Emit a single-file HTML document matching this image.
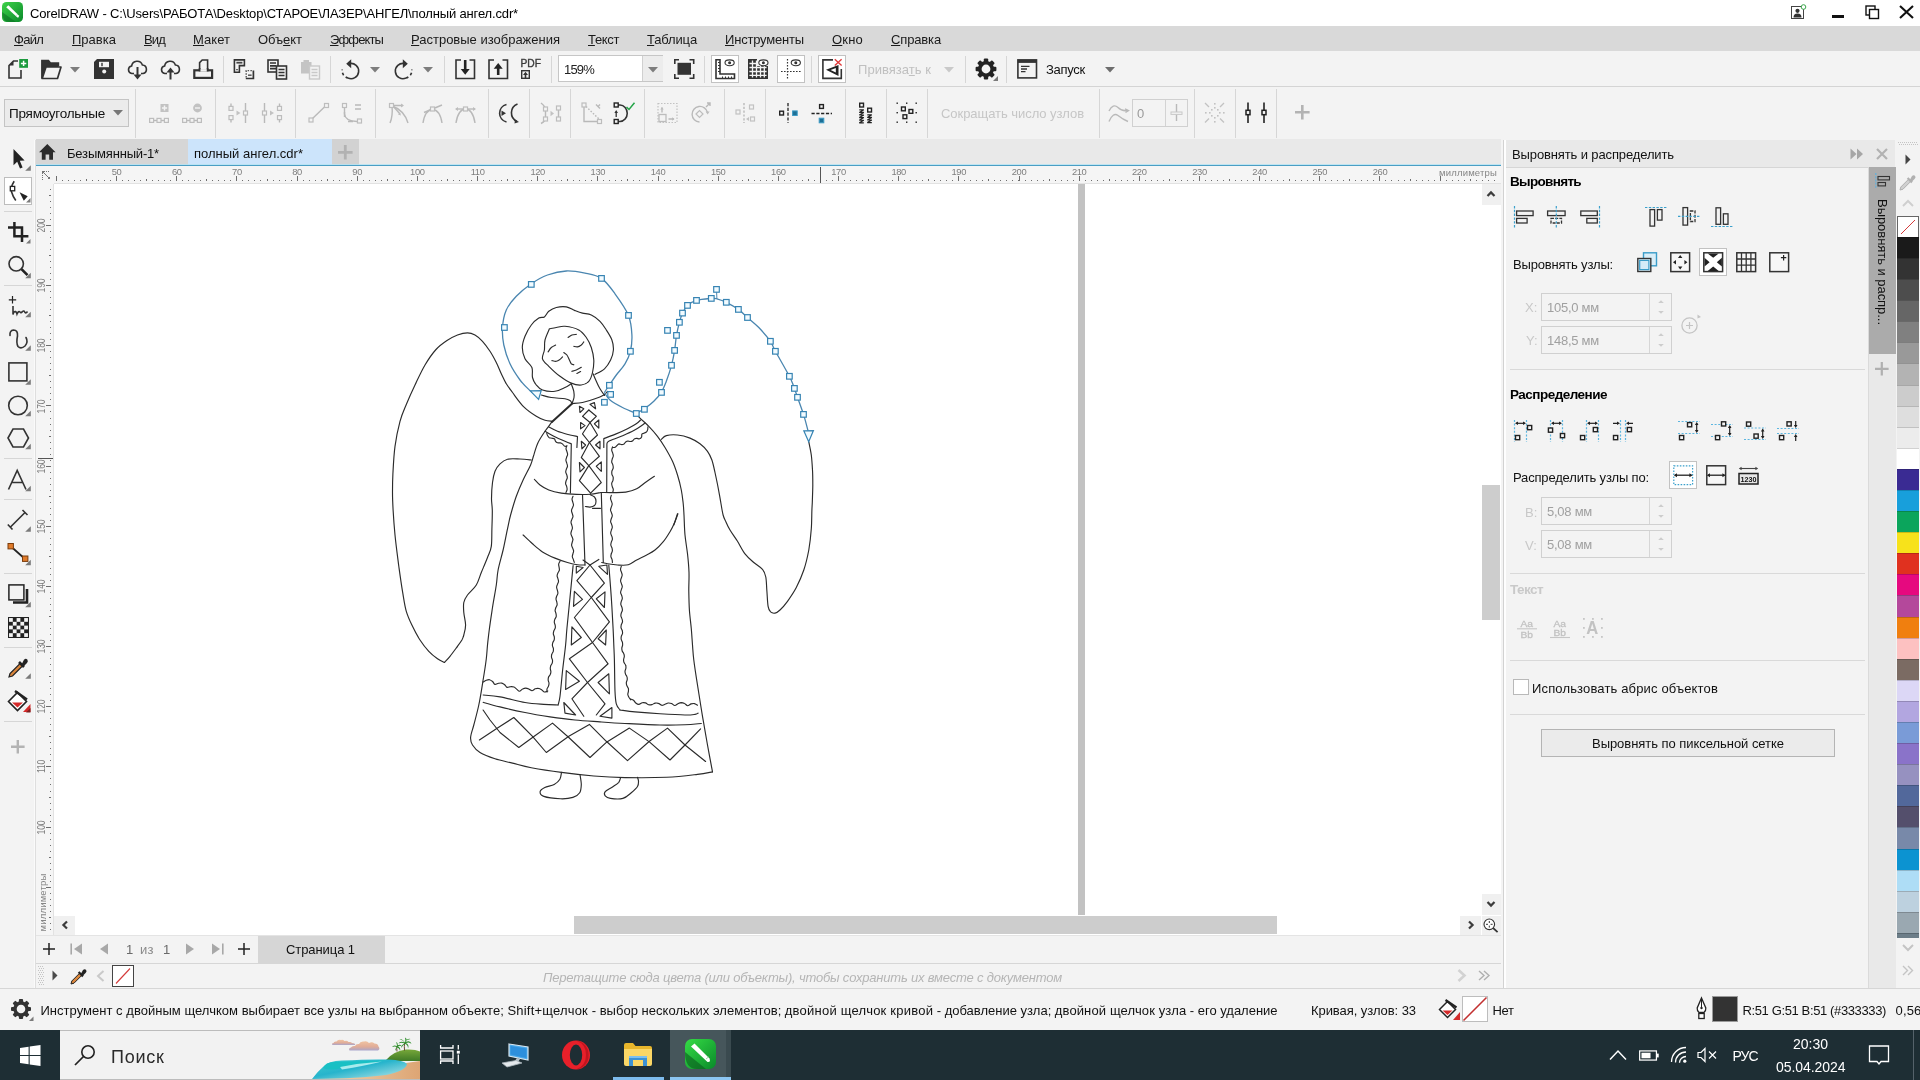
<!DOCTYPE html>
<html lang="ru">
<head>
<meta charset="utf-8">
<title>CorelDRAW - полный ангел.cdr</title>
<style>
html,body{margin:0;padding:0;}
body{width:1920px;height:1080px;overflow:hidden;will-change:transform;background:#f3f3f3;position:relative;
 font-family:"Liberation Sans",sans-serif;font-size:13px;color:#1a1a1a;}
.a{position:absolute;}
.t{position:absolute;white-space:nowrap;line-height:20px;height:20px;margin-top:1px;}
.g{color:#b4b4b4;}
svg{position:absolute;overflow:visible;}
.vs{position:absolute;width:1px;background:#d6d6d6;}
.hs{position:absolute;height:1px;background:#d6d6d6;}
.ic{stroke:#333;fill:none;stroke-width:1.6;}
.icd{stroke:#b9b9b9;fill:none;stroke-width:1.4;}

.rl{width:30px;text-align:center;font-size:9.4px;line-height:11px;height:11px;color:#7e7e7e;letter-spacing:-.35px}
.rv{width:30px;text-align:center;font-size:10px;line-height:11px;height:11px;color:#7e7e7e;letter-spacing:-.2px;margin-top:0;transform:rotate(-90deg) scaleX(.86)}
u{text-decoration:underline;text-underline-offset:1px;}
</style>
</head>
<body>
<!-- ===== title bar ===== -->
<div class="a" style="left:0;top:0;width:1920px;height:26px;background:#fff"></div>
<svg style="left:2px;top:2px" width="21" height="21" viewBox="0 0 21 21">
 <defs><linearGradient id="cg" x1="0" y1="0" x2="1" y2="1"><stop offset="0" stop-color="#3fd24a"/><stop offset="1" stop-color="#0a8a2a"/></linearGradient></defs>
 <rect x="0" y="0" width="21" height="20" rx="4.5" fill="url(#cg)"/>
 <path d="M0 10 Q0 20 8 20 L14 20 Z" fill="#0b6b22" opacity=".55"/>
 <path d="M4.2 5.2 L6.4 3.2 L16.6 13.2 Q17.6 15.6 15.4 15.6 Z" fill="#fff"/>
 <path d="M14.4 13.4 L15.8 12.2" stroke="#9bd6a2" stroke-width=".8"/>
</svg>
<span class="t" style="letter-spacing:-0.149px;left:30px;top:3px;font-size:13px;color:#000">CorelDRAW - C:\Users\РАБОТА\Desktop\СТАРОЕ\ЛАЗЕР\АНГЕЛ\полный ангел.cdr*</span>
<!-- window buttons -->
<svg style="left:1791px;top:4px" width="16" height="16" viewBox="0 0 16 16">
 <rect x=".5" y="2.5" width="12" height="12" fill="#fff" stroke="#444" stroke-width="1"/>
 <circle cx="6.5" cy="6.8" r="2.1" fill="#333"/><path d="M2.5 13.5 Q2.5 9.6 6.5 9.6 Q10.5 9.6 10.5 13.5Z" fill="#333"/>
 <circle cx="12.5" cy="3" r="2.3" fill="#fff" stroke="#3aa64a" stroke-width="1"/>
</svg>
<div class="a" style="left:1832px;top:15px;width:12px;height:3px;background:#111"></div>
<svg style="left:1865px;top:5px" width="15" height="15" viewBox="0 0 15 15"><rect x="1" y="1" width="9" height="9" fill="none" stroke="#111" stroke-width="1.4"/><rect x="4.5" y="4.5" width="9" height="9" fill="#fff" stroke="#111" stroke-width="1.4"/></svg>
<svg style="left:1899px;top:5px" width="15" height="14" viewBox="0 0 15 14"><path d="M1 1 L14 13 M14 1 L1 13" stroke="#111" stroke-width="2.1" fill="none"/></svg>

<!-- ===== menu bar ===== -->
<div class="a" style="left:0;top:26px;width:1920px;height:25px;background:#d9d9d9"></div>
<span class="t" style="letter-spacing:-0.742px;left:14px;top:29px"><u>Ф</u>айл</span>
<span class="t" style="letter-spacing:0.013px;left:72px;top:29px"><u>П</u>равка</span>
<span class="t" style="letter-spacing:-0.844px;left:144px;top:29px"><u>В</u>ид</span>
<span class="t" style="letter-spacing:0.037px;left:193px;top:29px"><u>М</u>акет</span>
<span class="t" style="letter-spacing:-0.049px;left:258px;top:29px">Объ<u>е</u>кт</span>
<span class="t" style="letter-spacing:-0.873px;left:330px;top:29px"><u>Э</u>ффекты</span>
<span class="t" style="letter-spacing:-0.005px;left:411px;top:29px"><u>Р</u>астровые изображения</span>
<span class="t" style="letter-spacing:-0.350px;left:588px;top:29px"><u>Т</u>екст</span>
<span class="t" style="letter-spacing:-0.141px;left:647px;top:29px"><u>Т</u>аблица</span>
<span class="t" style="letter-spacing:-0.188px;left:725px;top:29px"><u>И</u>нструменты</span>
<span class="t" style="letter-spacing:0.191px;left:832px;top:29px"><u>О</u>кно</span>
<span class="t" style="letter-spacing:-0.143px;left:891px;top:29px"><u>С</u>правка</span>
<!-- ===== standard toolbar (y 51-86) ===== -->
<div class="a" style="left:0;top:51px;width:1920px;height:35px;background:#f3f3f3"></div>
<div class="hs" style="left:0;top:86px;width:1920px;background:#d4d4d4"></div>
<!-- new -->
<svg style="left:7px;top:59px" width="21" height="21" viewBox="0 0 21 21">
 <path d="M11 2 H6.500 L2 6.500 V19 H14 V11" class="ic" stroke-width="1.700"/><path d="M6.500 2 V6.500 H2Z" fill="#333"/>
 <rect x="12.200" y="0" width="8.800" height="8.800" fill="#1c9a3e"/><path d="M16.600 1.700 V7.100 M13.900 4.400 H19.300" stroke="#fff" stroke-width="1.500"/>
</svg>
<!-- open -->
<svg style="left:41px;top:59px" width="21" height="21" viewBox="0 0 21 21">
 <path d="M.8 19.5 V1.5 H7.5 L9.5 4 H17.5 V7.5" fill="#333" stroke="#333" stroke-width="1.4"/>
 <path d="M1.2 19.5 L5 8 H20 L16.5 19.5 Z" fill="#f3f3f3" stroke="#333" stroke-width="1.7" stroke-linejoin="round"/>
</svg>
<svg style="left:70px;top:67px" width="10" height="6" viewBox="0 0 10 6"><path d="M0 0 H10 L5 5.5Z" fill="#7d7d7d"/></svg>
<!-- save -->
<svg style="left:94px;top:59px" width="21" height="21" viewBox="0 0 21 21">
 <path d="M3 0 H20 V20 H0 V3Z" fill="#333"/><rect x="5" y="2.800" width="10" height="5.400" fill="#f3f3f3"/><rect x="7.300" y="3.800" width="1.400" height="3.400" fill="#333"/><circle cx="10.200" cy="12.600" r="2" fill="#f3f3f3"/>
</svg>
<!-- cloud down -->
<svg style="left:127px;top:58.500px" width="21" height="21" viewBox="0 0 21 21">
 <path d="M7 14.5 H4.8 A3.8 3.8 0 0 1 4.6 7 A5.6 5.6 0 0 1 15.4 6 A4.3 4.3 0 0 1 16 14.5 H14" class="ic" stroke-width="1.6"/>
 <path d="M10.5 8 V17" stroke="#333" stroke-width="2"/><path d="M6.5 15.5 H14.5 L10.5 20.5Z" fill="#333"/>
</svg>
<!-- cloud up -->
<svg style="left:160px;top:58.500px" width="21" height="21" viewBox="0 0 21 21">
 <path d="M7 14.5 H4.8 A3.8 3.8 0 0 1 4.6 7 A5.6 5.6 0 0 1 15.4 6 A4.3 4.3 0 0 1 16 14.5 H14" class="ic" stroke-width="1.6"/>
 <path d="M10.5 12 V20.5" stroke="#333" stroke-width="2"/><path d="M6.5 13.5 H14.5 L10.5 8.5Z" fill="#333"/>
</svg>
<!-- print -->
<svg style="left:193px;top:59px" width="21" height="21" viewBox="0 0 21 21">
 <path d="M6.600 11 V3.600 L9.200 1 H14.600 V11" class="ic" stroke-width="1.700"/><rect x="1.300" y="11.300" width="17.800" height="7.600" fill="#f3f3f3" stroke="#333" stroke-width="2.200"/><path d="M6.600 11.300 H14.600" stroke="#f3f3f3" stroke-width="2.400"/><path d="M6.600 9 V12.400 M14.600 9 V12.400" stroke="#333" stroke-width="1.700"/>
</svg>
<div class="vs" style="left:223px;top:56px;height:27px"></div>
<!-- copy props -->
<svg style="left:233px;top:59px" width="22" height="21" viewBox="0 0 22 21">
 <path d="M1.400 .900 H11.400 V6.600 H6.400 V13.200 H1.400Z" class="ic" stroke-width="1.600"/><path d="M3.400 3.700 H9.400" stroke="#444" stroke-width="1.800"/><path d="M3.200 10.600 H4.800" stroke="#444" stroke-width="1.400"/>
 <path d="M20.400 11.400 V19.500 H12.800" fill="none" stroke="#333" stroke-width="1.700"/><path d="M13.200 18.600 V11.600 H19.600" fill="none" stroke="#555" stroke-width="1.400" stroke-dasharray="1.500 1.300"/><path d="M15 16.200 H18.600" stroke="#555" stroke-width="1.500"/>
</svg>
<!-- copy -->
<svg style="left:267px;top:59px" width="21" height="21" viewBox="0 0 21 21">
 <rect x="1" y="1" width="10" height="12" class="ic" stroke-width="1.6"/><path d="M3 4 H9 M3 6.8 H9 M3 9.6 H9" stroke="#333" stroke-width="1.7"/>
 <rect x="9.5" y="7" width="10" height="13" fill="#f3f3f3" stroke="#333" stroke-width="1.6"/><path d="M11.5 10.5 H17.5 M11.5 13.5 H17.5 M11.5 16.5 H17.5" stroke="#333" stroke-width="1.7"/>
</svg>
<!-- paste (disabled) -->
<svg style="left:300px;top:59px" width="21" height="21" viewBox="0 0 21 21">
 <path d="M1 3 H3.5 V1 H9 V3 H11.5 V14.5 H1Z" fill="#c4c4c4"/>
 <rect x="9.5" y="7" width="10" height="13" fill="#f3f3f3" stroke="#c9c9c9" stroke-width="1.4"/><path d="M11.5 10.5 H17.5 M11.5 13.5 H17.5 M11.5 16.5 H17.5" stroke="#c9c9c9" stroke-width="1.4"/>
</svg>
<div class="vs" style="left:330px;top:56px;height:27px"></div>
<!-- undo -->
<svg style="left:340px;top:59px" width="22" height="21" viewBox="0 0 22 21">
 <path d="M9.5 4.6 A7.6 7.6 0 1 1 8 19" class="ic" stroke-width="1.6"/>
 <path d="M8 19 A7.6 7.6 0 0 1 2.2 10.5" class="ic" stroke-width="1.6" stroke-dasharray="2.6 2.6"/>
 <path d="M6.2 4.8 L11.2 .3 V9.3Z" fill="#333"/>
</svg>
<svg style="left:370px;top:67px" width="10" height="6" viewBox="0 0 10 6"><path d="M0 0 H10 L5 5.5Z" fill="#7d7d7d"/></svg>
<!-- redo -->
<svg style="left:392px;top:59px" width="22" height="21" viewBox="0 0 22 21">
 <path d="M12.5 4.6 A7.6 7.6 0 1 0 14 19" class="ic" stroke-width="1.6"/>
 <path d="M14 19 A7.6 7.6 0 0 0 19.8 10.5" class="ic" stroke-width="1.6" stroke-dasharray="2.6 2.6"/>
 <path d="M15.8 4.8 L10.8 .3 V9.3Z" fill="#333"/>
</svg>
<svg style="left:423px;top:67px" width="10" height="6" viewBox="0 0 10 6"><path d="M0 0 H10 L5 5.5Z" fill="#7d7d7d"/></svg>
<div class="vs" style="left:444px;top:56px;height:27px"></div>
<!-- import -->
<svg style="left:455px;top:59px" width="21" height="21" viewBox="0 0 21 21">
 <path d="M6 1 H1 V19.5 H19.5 V1 H14.5" class="ic" stroke-width="1.7"/><path d="M10.2 1 V12" stroke="#222" stroke-width="2.6"/><path d="M5.7 10 H14.7 L10.2 15.8Z" fill="#222"/>
</svg>
<!-- export -->
<svg style="left:488px;top:59px" width="21" height="21" viewBox="0 0 21 21">
 <path d="M6 1 H1 V19.5 H19.5 V1 H14.5" class="ic" stroke-width="1.7"/><path d="M10.2 8 V16" stroke="#222" stroke-width="2.6"/><path d="M5.7 9.8 H14.7 L10.2 4Z" fill="#222"/>
</svg>
<!-- PDF -->
<svg style="left:521px;top:59px" width="21" height="21" viewBox="0 0 21 21">
 <text x="-.5" y="8.2" font-family="Liberation Sans,sans-serif" font-size="10.2" fill="#3a3a3a" stroke="#3a3a3a" stroke-width=".35" textLength="20.5" lengthAdjust="spacingAndGlyphs">PDF</text>
 <rect x=".7" y="11.7" width="7.6" height="7.6" fill="none" stroke="#333" stroke-width="1.4"/><path d="M4.5 19 V14.5" stroke="#333" stroke-width="1.6"/><path d="M2 16 L4.5 12.8 L7 16Z" fill="#333"/>
</svg>
<div class="vs" style="left:551px;top:56px;height:27px"></div>
<!-- zoom combo -->
<div class="a" style="left:558px;top:55px;width:105px;height:27px;box-sizing:border-box;border:1px solid #c6c6c6;background:#fff"></div>
<div class="a" style="left:642px;top:56px;width:20px;height:25px;background:#ececec;border-left:1px solid #d0d0d0"></div>
<svg style="left:648px;top:67px" width="10" height="6" viewBox="0 0 10 6"><path d="M0 0 H10 L5 5.5Z" fill="#7d7d7d"/></svg>
<span class="t" style="letter-spacing:-0.812px;left:564px;top:59px;font-size:13px;color:#222">159%</span>
<!-- full screen -->
<svg style="left:674px;top:59px" width="21" height="21" viewBox="0 0 21 21">
 <rect x="3.5" y="3.8" width="13.5" height="12" fill="#333"/>
 <path d="M.8 5 V.8 H5 M15.5 .8 H19.7 V5 M19.7 15 V19.2 H15.5 M5 19.2 H.8 V15" class="ic" stroke-width="1.6"/>
</svg>
<div class="vs" style="left:704px;top:56px;height:27px"></div>
<!-- rulers (active) -->
<div class="a" style="left:711px;top:55px;width:28px;height:28px;box-sizing:border-box;border:1px solid #c2c2c2;background:#fff"></div>
<svg style="left:715px;top:59px" width="21" height="21" viewBox="0 0 21 21">
 <path d="M1 .8 H5 V15 H19.5 V19.5 H1Z" class="ic" stroke-width="1.6"/><path d="M3 3.5 H5 M3 6.5 H5 M3 9.5 H5 M3 12.5 H5 M7.5 17.5 V19 M10.5 17.5 V19 M13.5 17.5 V19 M16.5 17.5 V19" stroke="#333" stroke-width="1"/>
 <ellipse cx="14.6" cy="3.8" rx="4.6" ry="2.9" fill="#fff" stroke="#333" stroke-width="1.1"/><circle cx="14.6" cy="3.8" r="1.5" fill="#333"/>
</svg>
<!-- grid -->
<svg style="left:748px;top:59px" width="21" height="21" viewBox="0 0 21 21">
 <g fill="#333"><rect x="0" y="0" width="20" height="20"/></g>
 <g stroke="#f3f3f3" stroke-width="1.3"><path d="M4.5 1.4 V18.6 M8.5 1.4 V18.6 M12.5 1.4 V18.6 M16.3 1.4 V18.6 M1.4 4.5 H18.6 M1.4 8.5 H18.6 M1.4 12.5 H18.6 M1.4 16.3 H18.6"/></g>
 <rect x="9" y="-1" width="12.5" height="8" fill="#f3f3f3"/>
 <ellipse cx="15.4" cy="3.8" rx="4.6" ry="2.9" fill="#fff" stroke="#333" stroke-width="1.1"/><circle cx="15.4" cy="3.8" r="1.5" fill="#333"/>
</svg>
<!-- guidelines (active) -->
<div class="a" style="left:777px;top:55px;width:28px;height:28px;box-sizing:border-box;border:1px solid #c2c2c2;background:#fff"></div>
<svg style="left:781px;top:59px" width="21" height="21" viewBox="0 0 21 21">
 <path d="M6.5 0 V20 M0 12.5 H20" stroke="#333" stroke-width="1.2" stroke-dasharray="1.6 1.4"/>
 <ellipse cx="14.8" cy="3.8" rx="4.6" ry="2.9" fill="#fff" stroke="#333" stroke-width="1.1"/><circle cx="14.8" cy="3.8" r="1.5" fill="#333"/>
</svg>
<div class="vs" style="left:811px;top:56px;height:27px"></div>
<!-- snap off (active) -->
<div class="a" style="left:818px;top:55px;width:28px;height:28px;box-sizing:border-box;border:1px solid #c2c2c2;background:#fff"></div>
<svg style="left:822px;top:59px" width="21" height="21" viewBox="0 0 21 21">
 <path d="M11 .9 H.9 V19.4 H19.3 V10" class="ic" stroke-width="1.6"/>
 <path d="M4 10.8 L16.5 6 V17 Z" fill="#222"/><path d="M8.6 10.9 L13.8 9 V13.4Z" fill="#fff"/>
 <path d="M12.8 .3 L19.6 6.4 M19.6 .3 L12.8 6.4" stroke="#e03a3a" stroke-width="1.4"/>
</svg>
<span class="t g" style="letter-spacing:0.037px;left:858px;top:59px;color:#c0c0c0">Привяза<u>т</u>ь к</span>
<svg style="left:944px;top:67px" width="10" height="6" viewBox="0 0 10 6"><path d="M0 0 H10 L5 5.5Z" fill="#c9c9c9"/></svg>
<div class="vs" style="left:965px;top:56px;height:27px"></div>
<!-- gear -->
<svg style="left:975px;top:58px" width="24" height="24" viewBox="0 0 24 24">
 <g transform="translate(11,11)"><circle r="6.2" fill="none" stroke="#222" stroke-width="3.6"/>
 <g fill="#222"><rect x="-2.2" y="-10.4" width="4.4" height="4" rx="1"/><rect x="-2.2" y="6.4" width="4.4" height="4" rx="1"/><rect x="-10.4" y="-2.2" width="4" height="4.4" rx="1"/><rect x="6.4" y="-2.2" width="4" height="4.4" rx="1"/>
 <g transform="rotate(45)"><rect x="-2.2" y="-10.4" width="4.4" height="4" rx="1"/><rect x="-2.2" y="6.4" width="4.4" height="4" rx="1"/><rect x="-10.4" y="-2.2" width="4" height="4.4" rx="1"/><rect x="6.4" y="-2.2" width="4" height="4.4" rx="1"/></g></g></g>
 <path d="M23 18 V23 H18Z" fill="#7a7a7a"/>
</svg>
<div class="vs" style="left:1006px;top:56px;height:27px"></div>
<!-- workspace window -->
<svg style="left:1017px;top:59px" width="21" height="20" viewBox="0 0 21 20">
 <rect x=".9" y=".9" width="18.6" height="18" class="ic" stroke-width="1.7"/><rect x=".9" y=".9" width="18.6" height="3" fill="#333"/><path d="M4 7.3 H12.5 M4 10 H10 M4 12.7 H8.5" stroke="#333" stroke-width="1.3"/>
</svg>
<span class="t" style="letter-spacing:-0.279px;left:1046px;top:59px;color:#111">Запуск</span>
<svg style="left:1105px;top:67px" width="10" height="6" viewBox="0 0 10 6"><path d="M0 0 H10 L5 5.5Z" fill="#6d6d6d"/></svg>
<!-- ===== property bar (y 87-139) ===== -->
<div class="a" style="left:0;top:87px;width:1920px;height:53px;background:#f3f3f3"></div>
<div class="a" style="left:4px;top:99px;width:125px;height:28px;box-sizing:border-box;border:1px solid #c4c4c4;background:#ebebeb"></div>
<span class="t" style="letter-spacing:-0.245px;left:9px;top:103px;font-size:13.5px;color:#111">Прямоугольные</span>
<svg style="left:113px;top:110px" width="10" height="6" viewBox="0 0 10 6"><path d="M0 0 H10 L5 5.5Z" fill="#777"/></svg>
<div class="vs" style="left:135px;top:89px;height:49px"></div>
<!-- add node (disabled) -->
<svg style="left:149px;top:103px" width="21" height="22" viewBox="0 0 21 22">
 <rect x="11.5" y="1" width="8" height="8" fill="#c2c2c2"/><path d="M15.500 2.400 V7.600 M12.900 5 H18.100" stroke="#f3f3f3" stroke-width="1.500"/>
 <path d="M0 17.5 H20" class="icd" stroke-width="1.2"/><g fill="#f3f3f3" stroke="#bdbdbd" stroke-width="1.2"><rect x=".6" y="15.4" width="4" height="4"/><rect x="8" y="15.4" width="4" height="4"/><rect x="15.4" y="15.4" width="4" height="4"/></g>
</svg>
<!-- delete node (disabled) -->
<svg style="left:182px;top:103px" width="21" height="22" viewBox="0 0 21 22">
 <circle cx="15.5" cy="5" r="4.4" fill="#c2c2c2"/><path d="M13 5 H18" stroke="#f3f3f3" stroke-width="1.4"/>
 <path d="M0 17.5 H20" class="icd" stroke-width="1.2"/><g fill="#f3f3f3" stroke="#bdbdbd" stroke-width="1.2"><rect x=".6" y="15.4" width="4" height="4"/><rect x="8" y="15.4" width="4" height="4"/><rect x="15.4" y="15.4" width="4" height="4"/></g>
</svg>
<div class="vs" style="left:215px;top:89px;height:49px"></div>
<!-- join (disabled) -->
<svg style="left:228px;top:102px" width="21" height="22" viewBox="0 0 21 22">
 <path d="M3 1.5 V4 M3 17.5 V20.5 M17.5 1 V21" class="icd"/><g fill="#f3f3f3" stroke="#bdbdbd" stroke-width="1.2"><rect x="1" y="4.4" width="4" height="4"/><rect x="1" y="13.6" width="4" height="4"/><rect x="15.5" y="9" width="4" height="4"/></g><path d="M8.5 8.4 L12.5 11 L8.5 13.6Z" fill="#c2c2c2"/>
</svg>
<!-- break (disabled) -->
<svg style="left:261px;top:102px" width="22" height="22" viewBox="0 0 22 22">
 <path d="M18.5 1.5 V4 M18.5 17.5 V20.5 M3.5 1 V21" class="icd"/><g fill="#f3f3f3" stroke="#bdbdbd" stroke-width="1.2"><rect x="16.5" y="4.4" width="4" height="4"/><rect x="16.5" y="13.6" width="4" height="4"/><rect x="1.5" y="9" width="4" height="4"/></g><path d="M9 8.4 L13 11 L9 13.6Z" fill="#c2c2c2"/>
</svg>
<div class="vs" style="left:295px;top:89px;height:49px"></div>
<!-- to line (disabled) -->
<svg style="left:308px;top:102px" width="22" height="22" viewBox="0 0 22 22">
 <path d="M4 17 L17.5 4" class="icd"/><g fill="#f3f3f3" stroke="#bdbdbd" stroke-width="1.2"><rect x="1" y="16" width="4" height="4"/><rect x="16.5" y="1.5" width="4" height="4"/></g>
</svg>
<!-- to curve (disabled) -->
<svg style="left:341px;top:102px" width="22" height="22" viewBox="0 0 22 22">
 <path d="M3.5 6 V12 Q4 19 16 19.5" class="icd"/><path d="M14 3 H20 M14 7 H20" class="icd"/><path d="M3.5 15 V10 M12 19.5 H7" class="icd" stroke-width="1"/>
 <g fill="#f3f3f3" stroke="#bdbdbd" stroke-width="1.2"><rect x="1.5" y="1.5" width="4" height="4"/><rect x="16.5" y="17" width="4" height="4"/></g>
</svg>
<div class="vs" style="left:375px;top:89px;height:49px"></div>
<!-- cusp (disabled) -->
<svg style="left:388px;top:102px" width="22" height="22" viewBox="0 0 22 22">
 <path d="M4 4 Q5 14 2 21 M4 4 Q16 8 20 21" class="icd"/><path d="M5 3.5 H15 M5 4 L12 12" class="icd"/><path d="M13 1.5 L16 3.5 L13 5.5Z M10 12.5 L13 13.5 L12 10.5Z" fill="#bdbdbd"/>
 <rect x="1.5" y="1.5" width="4" height="4" fill="#f3f3f3" stroke="#bdbdbd" stroke-width="1.2"/>
</svg>
<!-- smooth (disabled) -->
<svg style="left:422px;top:102px" width="22" height="22" viewBox="0 0 22 22">
 <path d="M1 21 Q3 8 10.5 7.5 Q18 8 20 21" class="icd"/><path d="M2 10.5 L20 3" class="icd"/>
 <rect x="8.5" y="5" width="4" height="4" fill="#f3f3f3" stroke="#bdbdbd" stroke-width="1.2"/>
</svg>
<!-- symmetrical (disabled) -->
<svg style="left:455px;top:102px" width="22" height="22" viewBox="0 0 22 22">
 <path d="M1 21 Q3 7.5 10.5 7 Q18 7.5 20 21" class="icd"/><path d="M1 7 H20" class="icd"/><path d="M0 7 L3 5 V9Z M21 7 L18 5 V9Z" fill="#bdbdbd"/>
 <rect x="8.5" y="5" width="4" height="4" fill="#f3f3f3" stroke="#bdbdbd" stroke-width="1.2"/>
</svg>
<div class="vs" style="left:488px;top:89px;height:49px"></div>
<!-- reverse direction -->
<svg style="left:498px;top:102px" width="22" height="22" viewBox="0 0 22 22">
 <path d="M8.5 2.5 A9 9 0 0 0 8.5 20" class="ic" stroke-width="1.6"/><path d="M19.5 2 A9.5 9.5 0 0 0 19 19.5" class="ic" stroke-width="1.6"/>
 <path d="M3.5 8.5 L8 11.2 L3.5 14Z" fill="#333"/><path d="M17 17.5 L21 20 L16.5 21.5Z" fill="#333"/>
</svg>
<div class="vs" style="left:529px;top:89px;height:49px"></div>
<!-- extract subpath (disabled) -->
<svg style="left:540px;top:102px" width="22" height="22" viewBox="0 0 22 22">
 <path d="M1 1 Q6 5 5.5 9 V15 Q6 19 1 21.5 M18.5 7 V17" class="icd"/><path d="M10.5 8.8 L14 11.5 L10.5 14.2Z" fill="#c2c2c2"/>
 <g fill="#f3f3f3" stroke="#bdbdbd" stroke-width="1.2"><rect x="3.5" y="5" width="4" height="4"/><rect x="3.5" y="15" width="4" height="4"/><rect x="16.5" y="4" width="4" height="4"/><rect x="16.5" y="15" width="4" height="4"/></g>
</svg>
<div class="vs" style="left:570px;top:89px;height:49px"></div>
<!-- extend curve to close (disabled) -->
<svg style="left:581px;top:102px" width="22" height="22" viewBox="0 0 22 22">
 <path d="M3 5 V19.5 H17" class="icd"/><path d="M5 4.5 L18 17" class="icd" stroke-dasharray="1.6 1.6"/><path d="M15 2.5 L19 6.5 M19 2.5 L17.5 4" class="icd" stroke-width="1"/>
 <g fill="#f3f3f3" stroke="#bdbdbd" stroke-width="1.2"><rect x="1" y="1" width="4" height="4"/><rect x="16.5" y="17.5" width="4" height="4"/></g>
</svg>
<!-- close curve -->
<svg style="left:613px;top:102px" width="23" height="22" viewBox="0 0 23 22">
 <path d="M5 3 H7 A7.200 8.200 0 0 1 7 19.500 H5" class="ic" stroke-width="1.500"/><path d="M3.2 15 V9.5" stroke="#333" stroke-width="1.3"/><path d="M1.4 11 L3.2 8 L5 11Z" fill="#333"/>
 <g fill="#f3f3f3" stroke="#222" stroke-width="1.4"><rect x="1.2" y="1" width="4" height="4"/><rect x="1.2" y="17.5" width="4" height="4"/></g>
 <path d="M13.5 5 L16 7.5 L21.5 .8" fill="none" stroke="#23a447" stroke-width="1.5"/>
</svg>
<div class="vs" style="left:644px;top:89px;height:49px"></div>
<!-- stretch/scale nodes (disabled) -->
<svg style="left:657px;top:102px" width="22" height="22" viewBox="0 0 22 22">
 <rect x="1" y="1.5" width="19" height="19" fill="none" stroke="#c2c2c2" stroke-width="1.2" stroke-dasharray="1.5 1.5"/>
 <rect x="2" y="12.5" width="7" height="7" fill="#f3f3f3" stroke="#bdbdbd" stroke-width="1.3"/><path d="M5 10.5 V5.5 M11.5 17 H17" class="icd" stroke-width="1.1"/><path d="M3.3 7.5 L5 5 L6.7 7.5Z M15 15.3 L17.6 17 L15 18.7Z" fill="#bdbdbd"/>
</svg>
<!-- rotate/skew nodes (disabled) -->
<svg style="left:690px;top:102px" width="22" height="22" viewBox="0 0 22 22">
 <path d="M9.5 20 A7.8 7.8 0 1 1 17.5 10.5" class="icd"/><path d="M15.6 9.5 L17.6 12.5 L19.6 9.5Z" fill="#bdbdbd"/>
 <path d="M6 12 L9.5 8.5 L13 12 L9.5 15.5Z" fill="#f3f3f3" stroke="#bdbdbd" stroke-width="1.2"/><path d="M16 5 L20 1 M17 1 H20 V4" class="icd" stroke-width="1.1"/>
</svg>
<div class="vs" style="left:724px;top:89px;height:49px"></div>
<!-- align nodes (disabled) -->
<svg style="left:735px;top:102px" width="22" height="22" viewBox="0 0 22 22">
 <path d="M9 1 V21" class="icd" stroke-dasharray="2.2 1.6"/><path d="M11 17 L14 15 V19Z" fill="#c2c2c2"/>
 <g fill="#f3f3f3" stroke="#c2c2c2" stroke-width="1.2"><rect x="1" y="8" width="4" height="4"/><rect x="14.5" y="3" width="4" height="4"/><rect x="15.5" y="15" width="4" height="4"/></g>
</svg>
<div class="vs" style="left:765px;top:89px;height:49px"></div>
<!-- reflect horizontally -->
<svg style="left:778px;top:102px" width="22" height="22" viewBox="0 0 22 22">
 <path d="M10 1 V21" stroke="#222" stroke-width="1.3" stroke-dasharray="3.2 1.6"/>
 <rect x="1.7" y="9.2" width="3.8" height="3.8" fill="#f3f3f3" stroke="#222" stroke-width="1.4"/><rect x="14.6" y="8.9" width="4.6" height="4.6" fill="#1c6f96" stroke="#3d9ac4" stroke-width="1"/>
</svg>
<!-- reflect vertically -->
<svg style="left:811px;top:102px" width="22" height="22" viewBox="0 0 22 22">
 <path d="M.5 11.5 H21" stroke="#222" stroke-width="1.3" stroke-dasharray="3.2 1.6"/>
 <rect x="8.6" y="2.6" width="3.8" height="3.8" fill="#f3f3f3" stroke="#222" stroke-width="1.4"/><rect x="8.2" y="16.2" width="4.6" height="4.6" fill="#1c6f96" stroke="#3d9ac4" stroke-width="1"/>
</svg>
<div class="vs" style="left:845px;top:89px;height:49px"></div>
<!-- elastic mode -->
<svg style="left:858px;top:102px" width="16" height="22" viewBox="0 0 16 22">
 <g fill="#f3f3f3" stroke="#222" stroke-width="1.400"><rect x="1.700" y="1.200" width="3.800" height="3.800"/><rect x="9.700" y="6.200" width="3.800" height="3.800"/></g>
 <path d="M1.300 7.800 H5.800 L1.300 10.400 H5.800 L1.300 13 H5.800 L1.300 15.600 H5.800 L1.300 18.200 H5.800 L1.300 20.800 H5.800 M9.300 12.800 H13.800 L9.300 15.400 H13.800 L9.300 18 H13.800 L9.300 20.600 H13.800" stroke="#222" stroke-width="1.150" fill="none" stroke-linejoin="bevel"/>
</svg>
<div class="vs" style="left:886px;top:89px;height:49px"></div>
<!-- select all nodes -->
<svg style="left:896px;top:102px" width="22" height="22" viewBox="0 0 22 22">
 <g fill="#222"><rect x=".5" y=".5" width="1.4" height="1.4"/><rect x="10" y=".5" width="1.4" height="1.4"/><rect x="19.5" y=".5" width="1.4" height="1.4"/><rect x=".5" y="10" width="1.4" height="1.4"/><rect x="19.5" y="10" width="1.4" height="1.4"/><rect x=".5" y="19.5" width="1.4" height="1.4"/><rect x="10" y="19.5" width="1.4" height="1.4"/><rect x="19.5" y="19.5" width="1.4" height="1.4"/></g>
 <g fill="#f3f3f3" stroke="#222" stroke-width="1.4"><rect x="5.5" y="5" width="3.8" height="3.8"/><rect x="13" y="7.5" width="3.8" height="3.8"/><rect x="7" y="12.8" width="3.8" height="3.8"/></g>
</svg>
<div class="vs" style="left:927px;top:89px;height:49px"></div>
<span class="t" style="letter-spacing:-0.050px;left:941px;top:103px;color:#c6c6c6">Сокращать число узлов</span>
<div class="vs" style="left:1099px;top:89px;height:49px"></div>
<!-- curve smoothness -->
<svg style="left:1108px;top:102px" width="22" height="22" viewBox="0 0 22 22">
 <path d="M1 9 Q5 1 10 5.5 Q14 9.5 19.5 8.5" class="icd"/><path d="M1 19.5 Q5 10 10 13.5 Q15 17.5 20 19.5" class="icd"/><path d="M17 6.8 L20.5 8.5 L17.5 10.5" class="icd" stroke-width="1.1"/>
</svg>
<div class="a" style="left:1132px;top:99px;width:56px;height:28px;box-sizing:border-box;border:1px solid #d0d0d0;background:#f3f3f3"></div>
<div class="vs" style="left:1165px;top:100px;height:26px;background:#d3d3d3"></div>
<span class="t" style="left:1137px;top:103px;color:#9a9a9a">0</span>
<svg style="left:1169px;top:104px" width="16" height="18" viewBox="0 0 16 18"><path d="M7.5 0 V17" class="icd" stroke-width="1.2"/><rect x="2" y="8" width="11" height="2.4" fill="#f3f3f3" stroke="#c8c8c8" stroke-width="1"/></svg>
<div class="vs" style="left:1194px;top:89px;height:49px"></div>
<!-- bounding (disabled) -->
<svg style="left:1204px;top:102px" width="22" height="22" viewBox="0 0 22 22">
 <g stroke="#c2c2c2" stroke-width="1.3"><path d="M1 1 L5 5 M20 1 L16 5 M1 20.5 L5 16.5 M20 20.5 L16 16.5"/></g>
 <g fill="#c2c2c2"><rect x="10" y="1" width="1.6" height="1.6"/><rect x="10" y="5" width="1.6" height="1.6"/><rect x="10" y="15" width="1.6" height="1.6"/><rect x="10" y="19" width="1.6" height="1.6"/><rect x="1" y="10" width="1.6" height="1.6"/><rect x="5" y="10" width="1.6" height="1.6"/><rect x="15" y="10" width="1.6" height="1.6"/><rect x="19" y="10" width="1.6" height="1.6"/><rect x="7" y="7" width="1.6" height="1.6"/><rect x="13" y="7" width="1.6" height="1.6"/><rect x="7" y="13" width="1.6" height="1.6"/><rect x="13" y="13" width="1.6" height="1.6"/></g>
</svg>
<div class="vs" style="left:1235px;top:89px;height:49px"></div>
<!-- sliders -->
<svg style="left:1245px;top:102px" width="22" height="22" viewBox="0 0 22 22">
 <path d="M3 .5 V21 M19 .5 V21" stroke="#222" stroke-width="1.6"/><g fill="#f3f3f3" stroke="#222" stroke-width="1.5"><rect x="1" y="8.3" width="4" height="4.4"/><rect x="17" y="8.3" width="4" height="4.4"/></g>
</svg>
<div class="vs" style="left:1276px;top:89px;height:49px"></div>
<svg style="left:1295px;top:105px" width="15" height="15" viewBox="0 0 15 15"><path d="M7.3 0 V14.6 M0 7.3 H14.6" stroke="#b3b3b3" stroke-width="2.6"/></svg>
<!-- ===== toolbox (x 0-36) ===== -->
<div class="a" style="left:0;top:140px;width:36px;height:849px;background:#f3f3f3"></div>
<div class="a" style="left:34px;top:140px;width:1px;height:849px;background:#fafafa"></div><div class="a" style="left:35px;top:140px;width:1px;height:849px;background:#dedede"></div>
<!-- pick -->
<svg style="left:8px;top:148px" width="24" height="24" viewBox="0 0 24 24">
 <path d="M5.5 1 V17.2 L9.2 13.8 L12 20.6 L14.6 19.5 L11.8 12.8 L16.6 12.6 Z" fill="#222"/><path d="M22.8 17.2 V22.8 H17.2Z" fill="#7a7a7a"/>
</svg>
<!-- shape (selected) -->
<div class="a" style="left:4px;top:177px;width:28px;height:28px;box-sizing:border-box;border:1px solid #bdbdbd;background:#fff"></div>
<svg style="left:8px;top:180px" width="24" height="24" viewBox="0 0 24 24">
 <path d="M6.200 1.300 Q2.200 7.500 3.600 12 Q4.800 16.500 7.800 20.400" class="ic" stroke-width="1.500"/>
 <rect x="2.300" y="6.400" width="4.400" height="4.400" fill="#fff" stroke="#222" stroke-width="1.300"/>
 <path d="M11.600 12.300 L19.700 16.200 L15.800 20.800Z" fill="#222"/><path d="M22.500 18 V22.500 H18Z" fill="#7a7a7a"/>
</svg>
<div class="hs" style="left:4px;top:211px;width:28px"></div>
<!-- crop -->
<svg style="left:8px;top:221px" width="24" height="24" viewBox="0 0 24 24">
 <path d="M0 6.600 H15.200 M6.400 1 V15.300 M5.200 15.200 H20.400 M14 5.400 V21" stroke="#222" stroke-width="2.500" fill="none"/>
 <path d="M22.500 18 V22.500 H18Z" fill="#7a7a7a"/>
</svg>
<!-- zoom -->
<svg style="left:8px;top:255px" width="24" height="24" viewBox="0 0 24 24">
 <circle cx="8.2" cy="8.8" r="7.2" class="ic" stroke-width="1.6"/><path d="M13.5 14.2 L19.5 20.2" stroke="#222" stroke-width="2.6"/><path d="M22.8 17.7 V23.3 H17.2Z" fill="#7a7a7a"/>
</svg>
<div class="hs" style="left:4px;top:285px;width:28px"></div>
<!-- freehand -->
<svg style="left:8px;top:295px" width="24" height="24" viewBox="0 0 24 24">
 <path d="M4.5 1 V8.5 M.8 4.8 H8.2" stroke="#222" stroke-width="1.2"/><path d="M5 11 V19.5 Q6 16 7.5 16.5 Q8.5 17 9 19 Q10.5 15.5 12 17 Q13 18.5 14.5 16.5 Q16 15 17 17.5 Q18 18.5 19.5 16.5" class="ic" stroke-width="1.5"/>
 <path d="M22.8 16.7 V22.3 H17.2Z" fill="#7a7a7a"/>
</svg>
<!-- artistic media -->
<svg style="left:8px;top:328px" width="24" height="24" viewBox="0 0 24 24">
 <path d="M2 7.5 Q1.5 2.5 5.5 2 Q10 2 9.5 8 Q8 15 10 18.5 Q13 21.5 17 18 Q20.5 14 18 9.5" class="ic" stroke-width="2.1" stroke-linecap="round"/><path d="M22.8 17.2 V22.8 H17.2Z" fill="#7a7a7a"/>
</svg>
<!-- rectangle -->
<svg style="left:8px;top:362px" width="24" height="24" viewBox="0 0 24 24">
 <rect x=".9" y=".9" width="18" height="18" class="ic" stroke-width="1.6"/><path d="M22.8 17.2 V22.8 H17.2Z" fill="#7a7a7a"/>
</svg>
<!-- ellipse -->
<svg style="left:8px;top:395px" width="24" height="24" viewBox="0 0 24 24">
 <circle cx="10" cy="10.5" r="9.3" class="ic" stroke-width="1.5"/><path d="M22.8 15.7 V21.3 H17.2Z" fill="#7a7a7a"/>
</svg>
<!-- polygon -->
<svg style="left:7px;top:428px" width="25" height="24" viewBox="0 0 25 24">
 <path d="M1 10 L6 1 H16.5 L21.5 10 L16.5 19 H6 Z" class="ic" stroke-width="1.5"/><path d="M23.8 15.7 V21.3 H18.2Z" fill="#7a7a7a"/>
</svg>
<div class="hs" style="left:4px;top:458px;width:28px"></div>
<!-- text -->
<svg style="left:7px;top:469px" width="25" height="24" viewBox="0 0 25 24">
 <path d="M1.5 20.5 L10.2 1.5 L19 20.5 M4.8 13.5 H15.6" class="ic" stroke-width="2"/><path d="M23.8 16.7 V22.3 H18.2Z" fill="#7a7a7a"/>
</svg>
<div class="hs" style="left:4px;top:499px;width:28px"></div>
<!-- dimension -->
<svg style="left:7px;top:509px" width="25" height="24" viewBox="0 0 25 24">
 <path d="M3 18.5 L18 3.5 M.8 15.5 L5.5 20.5 M15.5 1 L20.5 6" class="ic" stroke-width="1.4"/><path d="M23.8 17.2 V22.8 H18.2Z" fill="#7a7a7a"/>
</svg>
<!-- connector -->
<svg style="left:7px;top:542px" width="25" height="24" viewBox="0 0 25 24">
 <path d="M4 4.5 L18 17" stroke="#222" stroke-width="1.7"/><rect x="1" y="1.5" width="5.4" height="5.4" fill="#e07b2a" stroke="#7a3c0c" stroke-width="1"/><rect x="15.5" y="14" width="5.4" height="5.4" fill="#e07b2a" stroke="#7a3c0c" stroke-width="1"/><path d="M23.8 17.7 V23.3 H18.2Z" fill="#7a7a7a"/>
</svg>
<div class="hs" style="left:4px;top:573px;width:28px"></div>
<!-- drop shadow -->
<svg style="left:8px;top:584px" width="24" height="24" viewBox="0 0 24 24">
 <path d="M5 18.5 H19 V5" stroke="#222" stroke-width="2.6" fill="none"/><rect x=".9" y=".9" width="15" height="15" fill="#f3f3f3" stroke="#222" stroke-width="1.5"/><path d="M22.8 17.7 V23.3 H17.2Z" fill="#7a7a7a"/>
</svg>
<!-- transparency -->
<svg style="left:8px;top:617px" width="21" height="21" viewBox="0 0 20 20">
 <rect width="20" height="20" fill="#222"/><g fill="#f3f3f3"><rect x="1" y="1" width="3.6" height="3.6"/><rect x="8.2" y="1" width="3.6" height="3.6"/><rect x="15.4" y="1" width="3.6" height="3.6"/><rect x="4.6" y="4.6" width="3.6" height="3.6"/><rect x="11.8" y="4.6" width="3.6" height="3.6"/><rect x="1" y="8.2" width="3.6" height="3.6"/><rect x="8.2" y="8.2" width="3.6" height="3.6"/><rect x="15.4" y="8.2" width="3.6" height="3.6"/><rect x="4.6" y="11.8" width="3.6" height="3.6"/><rect x="11.8" y="11.8" width="3.6" height="3.6"/><rect x="1" y="15.4" width="3.6" height="3.6"/><rect x="8.2" y="15.4" width="3.6" height="3.6"/><rect x="15.4" y="15.4" width="3.6" height="3.6"/></g>
</svg>
<div class="hs" style="left:4px;top:647px;width:28px"></div>
<!-- eyedropper -->
<svg style="left:7px;top:657px" width="25" height="24" viewBox="0 0 25 24">
 <path d="M2 20 L3 16.5 L13 6.5 L15.5 9 L5.5 19 Z" fill="#d9853b" stroke="#222" stroke-width="1.2"/><path d="M12 5 L17 10" stroke="#222" stroke-width="2.6"/><path d="M14.5 7.5 L17 2.8 Q18.8 1 20.3 2.6 Q21.6 4.2 20 6 L16.5 9.5Z" fill="#222"/><path d="M23.8 16.2 V21.8 H18.2Z" fill="#7a7a7a"/>
</svg>
<!-- interactive fill -->
<svg style="left:7px;top:690px" width="25" height="24" viewBox="0 0 25 24">
 <path d="M1.5 11.5 L10.5 2.5 L19.5 11.5 L10.5 20.5Z" fill="#fff" stroke="#222" stroke-width="1.6"/><path d="M8 1 L20 9.5" stroke="#222" stroke-width="2.4"/><path d="M5 12.5 H16 L10.5 17.5Z" fill="#d42a2a"/><path d="M23.5 14 V22 H16Z" fill="#d42a2a"/><path d="M23.5 18 V22.5 H19Z" fill="#7a2020"/>
</svg>
<div class="hs" style="left:4px;top:721px;width:28px"></div>
<svg style="left:11px;top:740px" width="14" height="14" viewBox="0 0 14 14"><path d="M6.8 0 V13.6 M0 6.8 H13.6" stroke="#b3b3b3" stroke-width="2.4"/></svg>
<!-- ===== document window ===== -->
<div class="a" style="left:36px;top:139px;width:1465px;height:26px;background:#e9e9e9"></div>
<div class="a" style="left:36px;top:139px;width:152px;height:26px;background:#d6d6d6"></div>
<div class="a" style="left:188px;top:139px;width:144px;height:26px;background:#cce4fb"></div>
<div class="a" style="left:332px;top:139px;width:27px;height:26px;background:#d2d2d2"></div>
<svg style="left:39px;top:144px" width="17" height="16" viewBox="0 0 17 16"><path d="M8.3 0 L16.6 8.2 H14 V15.8 H10.2 V10.6 H6.6 V15.8 H2.8 V8.2 H0 Z" fill="#2b2b2b"/></svg>
<span class="t" style="letter-spacing:-0.180px;left:67px;top:143px;font-size:13px;color:#111">Безымянный-1*</span>
<span class="t" style="letter-spacing:0.003px;left:194px;top:143px;font-size:13px;color:#111">полный ангел.cdr*</span>
<svg style="left:338px;top:145px" width="15" height="15" viewBox="0 0 15 15"><path d="M7.3 0 V14.6 M0 7.3 H14.6" stroke="#b2b2b2" stroke-width="2.8"/></svg>
<div class="a" style="left:36px;top:164px;width:1465px;height:1px;background:#b4e2f2;opacity:.8"></div>
<div class="a" style="left:36px;top:165px;width:1465px;height:1px;background:#4a9ec4"></div>
<div class="a" style="left:36px;top:166px;width:1465px;height:18px;background:#f5f5f5"></div>
<div class="a" style="left:36px;top:184px;width:18px;height:752px;background:#f5f5f5"></div>
<div class="a" style="left:54px;top:184px;width:1447px;height:752px;background:#fff"></div>
<div class="a" style="left:54px;top:183px;width:1447px;height:1px;background:#e2e2e2"></div>
<div class="a" style="left:53px;top:184px;width:1px;height:752px;background:#e2e2e2"></div>
<svg style="left:0;top:0" width="1920" height="1080" viewBox="0 0 1920 1080" shape-rendering="crispEdges">
<g stroke="#6e6e6e">
<line x1="55.94" y1="180.5" x2="1500" y2="180.5" stroke-width="1" stroke-dasharray="1 5.0160"/>
<line x1="86.02" y1="180" x2="1500" y2="180" stroke-width="2.4" stroke-dasharray="1 59.1600"/>
<line x1="55.94" y1="178.600" x2="1500" y2="178.600" stroke-width="4.600" stroke-dasharray="1 59.1600"/>
<line x1="50.5" y1="188.90" x2="50.5" y2="935" stroke-width="1" stroke-dasharray="1 5.0160"/>
<line x1="50" y1="194.92" x2="50" y2="935" stroke-width="2.4" stroke-dasharray="1 59.1600"/>
<line x1="48.5" y1="225.00" x2="48.5" y2="935" stroke-width="5" stroke-dasharray="1 59.1600"/>
</g>
<path d="M820.5 167 V183 M38 458.5 H53" stroke="#555" stroke-width="1"/>
<g stroke="#777" stroke-width="1" fill="none"><path d="M41.5 171.5 H50" stroke-dasharray="1 1"/><path d="M42.500 171 V180" stroke-dasharray="1 1"/><path d="M42.500 171.500 L48.500 177.500"/></g><path d="M41.500 170.500 H45 L41.500 174Z" fill="#777"/><rect x="47.500" y="176.500" width="2" height="2" fill="#777"/>
</svg>
<span class="t rl" style="left:101.6px;top:164.7px">50</span>
<span class="t rl" style="left:161.8px;top:164.7px">60</span>
<span class="t rl" style="left:221.9px;top:164.7px">70</span>
<span class="t rl" style="left:282.1px;top:164.7px">80</span>
<span class="t rl" style="left:342.2px;top:164.7px">90</span>
<span class="t rl" style="left:402.4px;top:164.7px">100</span>
<span class="t rl" style="left:462.6px;top:164.7px">110</span>
<span class="t rl" style="left:522.7px;top:164.7px">120</span>
<span class="t rl" style="left:582.9px;top:164.7px">130</span>
<span class="t rl" style="left:643.0px;top:164.7px">140</span>
<span class="t rl" style="left:703.2px;top:164.7px">150</span>
<span class="t rl" style="left:763.4px;top:164.7px">160</span>
<span class="t rl" style="left:823.5px;top:164.7px">170</span>
<span class="t rl" style="left:883.7px;top:164.7px">180</span>
<span class="t rl" style="left:943.8px;top:164.7px">190</span>
<span class="t rl" style="left:1004.0px;top:164.7px">200</span>
<span class="t rl" style="left:1064.2px;top:164.7px">210</span>
<span class="t rl" style="left:1124.3px;top:164.7px">220</span>
<span class="t rl" style="left:1184.5px;top:164.7px">230</span>
<span class="t rl" style="left:1244.6px;top:164.7px">240</span>
<span class="t rl" style="left:1304.8px;top:164.7px">250</span>
<span class="t rl" style="left:1365.0px;top:164.7px">260</span>
<span class="t rv" style="left:26px;top:220.0px">200</span>
<span class="t rv" style="left:26px;top:280.2px">190</span>
<span class="t rv" style="left:26px;top:340.3px">180</span>
<span class="t rv" style="left:26px;top:400.5px">170</span>
<span class="t rv" style="left:26px;top:460.6px">160</span>
<span class="t rv" style="left:26px;top:520.8px">150</span>
<span class="t rv" style="left:26px;top:581.0px">140</span>
<span class="t rv" style="left:26px;top:641.1px">130</span>
<span class="t rv" style="left:26px;top:701.3px">120</span>
<span class="t rv" style="left:26px;top:761.4px">110</span>
<span class="t rv" style="left:26px;top:821.6px">100</span>
<span class="t" style="letter-spacing:0.180px;left:1439px;top:165.5px;font-size:9.5px;line-height:11px;height:11px;color:#858585">миллиметры</span>
<span class="t" style="left:12.5px;top:895.5px;width:58px;font-size:9.5px;line-height:11px;height:11px;color:#858585;transform:rotate(-90deg);text-align:center"><span style="letter-spacing:0.180px">миллиметры</span></span>
<div class="a" style="left:1078px;top:184px;width:7px;height:731px;background:#c2c2c2"></div>
<div class="a" style="left:1482px;top:184px;width:19px;height:21px;background:#f0f0f0"></div>
<svg style="left:1486px;top:190px" width="10" height="8" viewBox="0 0 10 8"><path d="M1.500 6 L5 2.400 L8.500 6" stroke="#3c3c3c" stroke-width="2.200" fill="none"/></svg>
<div class="a" style="left:1482px;top:485px;width:18px;height:135px;background:#cdcdcd"></div>
<div class="a" style="left:1482px;top:894px;width:19px;height:21px;background:#f0f0f0"></div>
<svg style="left:1486px;top:900px" width="10" height="8" viewBox="0 0 10 8"><path d="M1.500 2 L5 5.600 L8.500 2" stroke="#3c3c3c" stroke-width="2.200" fill="none"/></svg>
<div class="a" style="left:54px;top:916px;width:21px;height:20px;background:#f0f0f0"></div>
<svg style="left:61px;top:920px" width="8" height="10" viewBox="0 0 8 10"><path d="M6 1.500 L2.400 5 L6 8.500" stroke="#3c3c3c" stroke-width="2.200" fill="none"/></svg>
<div class="a" style="left:574px;top:916px;width:703px;height:18px;background:#cdcdcd"></div>
<div class="a" style="left:1460px;top:916px;width:21px;height:20px;background:#f0f0f0"></div>
<svg style="left:1467px;top:920px" width="8" height="10" viewBox="0 0 8 10"><path d="M2 1.500 L5.600 5 L2 8.500" stroke="#3c3c3c" stroke-width="2.200" fill="none"/></svg>
<div class="a" style="left:1482px;top:916px;width:19px;height:20px;background:#f0f0f0"></div>
<svg style="left:1483px;top:918px" width="16" height="15" viewBox="0 0 16 15"><circle cx="6.3" cy="6.3" r="5.3" fill="#fff" stroke="#333" stroke-width="1.1"/><path d="M10.2 10.2 L14.6 14.2" stroke="#333" stroke-width="1.8"/><path d="M6.3 3 V9.6 M3 6.3 H9.6" stroke="#333" stroke-width="1" stroke-dasharray="2 2.6"/></svg>
<div class="a" style="left:36px;top:936px;width:1465px;height:53px;background:#f3f3f3"></div>
<div class="a" style="left:258px;top:936px;width:127px;height:27px;background:#d6d6d6"></div>
<span class="t" style="letter-spacing:-0.077px;left:286px;top:939px;font-size:13px;color:#111">Страница 1</span>
<svg style="left:43px;top:943px" width="12" height="12" viewBox="0 0 12 12"><path d="M6 0 V12 M0 6 H12" stroke="#222" stroke-width="1.5"/></svg>
<svg style="left:70px;top:943px" width="13" height="12" viewBox="0 0 13 12"><path d="M1.2 .5 V11.5" stroke="#a8a8a8" stroke-width="1.6"/><path d="M12 .5 V11.5 L4 6Z" fill="#a8a8a8"/></svg>
<svg style="left:99px;top:943px" width="10" height="12" viewBox="0 0 10 12"><path d="M9 .5 V11.5 L1 6Z" fill="#a8a8a8"/></svg>
<span class="t" style="left:126px;top:939px;font-size:13px;color:#6a6a6a">1</span>
<span class="t" style="letter-spacing:0.133px;left:140px;top:939px;font-size:13px;color:#8a8a8a">из</span>
<span class="t" style="left:163px;top:939px;font-size:13px;color:#6a6a6a">1</span>
<svg style="left:185px;top:943px" width="10" height="12" viewBox="0 0 10 12"><path d="M1 .5 V11.5 L9 6Z" fill="#a8a8a8"/></svg>
<svg style="left:211px;top:943px" width="13" height="12" viewBox="0 0 13 12"><path d="M11.8 .5 V11.5" stroke="#a8a8a8" stroke-width="1.6"/><path d="M1 .5 V11.5 L9 6Z" fill="#a8a8a8"/></svg>
<svg style="left:238px;top:943px" width="12" height="12" viewBox="0 0 12 12"><path d="M6 0 V12 M0 6 H12" stroke="#222" stroke-width="1.5"/></svg>
<div class="hs" style="left:36px;top:963px;width:1465px"></div>
<div class="hs" style="left:36px;top:935px;width:1465px;background:#e4e4e4"></div>
<svg style="left:38px;top:966px" width="7" height="20" viewBox="0 0 7 20"><g fill="#c4c4c4"><rect x="0" y="0" width="1" height="1"/><rect x="2" y="0" width="1" height="1"/><rect x="4" y="0" width="1" height="1"/><rect x="1" y="2" width="1" height="1"/><rect x="3" y="2" width="1" height="1"/><rect x="5" y="2" width="1" height="1"/><rect x="0" y="4" width="1" height="1"/><rect x="2" y="4" width="1" height="1"/><rect x="4" y="4" width="1" height="1"/><rect x="1" y="6" width="1" height="1"/><rect x="3" y="6" width="1" height="1"/><rect x="5" y="6" width="1" height="1"/><rect x="0" y="8" width="1" height="1"/><rect x="2" y="8" width="1" height="1"/><rect x="4" y="8" width="1" height="1"/><rect x="1" y="10" width="1" height="1"/><rect x="3" y="10" width="1" height="1"/><rect x="5" y="10" width="1" height="1"/><rect x="0" y="12" width="1" height="1"/><rect x="2" y="12" width="1" height="1"/><rect x="4" y="12" width="1" height="1"/><rect x="1" y="14" width="1" height="1"/><rect x="3" y="14" width="1" height="1"/><rect x="5" y="14" width="1" height="1"/><rect x="0" y="16" width="1" height="1"/><rect x="2" y="16" width="1" height="1"/><rect x="4" y="16" width="1" height="1"/><rect x="1" y="18" width="1" height="1"/><rect x="3" y="18" width="1" height="1"/><rect x="5" y="18" width="1" height="1"/></g></svg>
<svg style="left:52px;top:970px" width="6" height="11" viewBox="0 0 6 11"><path d="M.5 .5 V10.5 L5.5 5.5Z" fill="#4a4a4a"/></svg>
<svg style="left:70px;top:968px" width="18" height="17" viewBox="0 0 18 17"><path d="M1 16 L1.8 13 L9.5 5.3 L11.7 7.5 L4 15.2 Z" fill="#d9853b" stroke="#222" stroke-width="1"/><path d="M8.6 4 L13 8.4" stroke="#222" stroke-width="2.2"/><path d="M10.8 6 L13 2 Q14.6 .4 16 1.8 Q17.2 3.2 15.8 4.8 L12.6 8Z" fill="#222"/></svg>
<svg style="left:96px;top:970px" width="9" height="12" viewBox="0 0 9 12"><path d="M7.5 1 L2 6 L7.5 11" stroke="#c9c9c9" stroke-width="2" fill="none"/></svg>
<div class="a" style="left:112px;top:965px;width:22px;height:22px;box-sizing:border-box;border:1px solid #444;background:#fff"></div>
<svg style="left:112px;top:965px" width="22" height="22" viewBox="0 0 22 22"><path d="M4 18.5 L18 3.5" stroke="#d43a3a" stroke-width="1.1"/></svg>
<span class="t" style="letter-spacing:-0.194px;left:543px;top:966.5px;font-size:13px;font-style:italic;color:#b5b5b5">Перетащите сюда цвета (или объекты), чтобы сохранить их вместе с документом</span>
<svg style="left:1457px;top:969px" width="34" height="13" viewBox="0 0 34 13"><path d="M1.500 1 L7.500 6.500 L1.500 12" stroke="#d2d2d2" stroke-width="2.600" fill="none"/><path d="M22 2 L27 6.5 L22 11 M27 2 L32 6.5 L27 11" stroke="#b0b0b0" stroke-width="1.4" fill="none"/></svg>
<div class="hs" style="left:0;top:988px;width:1920px"></div>
<div class="a" style="left:1501px;top:140px;width:2px;height:848px;background:#f4f4f4"></div>
<!-- ===== drawing ===== -->
<svg style="left:0;top:0" width="1920" height="1080" viewBox="0 0 1920 1080">
<g fill="none" stroke="#2b2b2b" stroke-width="1.15" stroke-linejoin="round" stroke-linecap="round">
<path d="M552.5 421.3 C551.2 421.1 547.7 421.1 545.0 420.3 C542.3 419.5 539.8 418.5 536.3 416.3 C532.8 414.1 527.8 410.9 523.8 406.9 C519.8 402.9 515.4 396.4 512.5 392.5 C509.6 388.6 508.2 386.9 506.3 383.8 C504.4 380.7 503.0 377.4 501.3 373.8 C499.6 370.2 498.2 366.2 496.3 362.5 C494.4 358.8 492.3 354.8 490.0 351.3 C487.7 347.8 485.0 344.0 482.5 341.3 C480.0 338.6 477.5 336.4 475.0 335.0 C472.5 333.6 470.4 332.8 467.5 332.8 C464.6 332.8 460.9 333.7 457.5 335.0 C454.1 336.3 450.6 338.1 447.0 340.5 C443.4 342.9 439.7 345.4 436.0 349.5 C432.3 353.6 428.5 359.1 425.0 365.0 C421.5 370.9 418.1 378.5 415.0 385.0 C411.9 391.5 409.0 397.9 406.5 404.0 C404.0 410.1 401.9 414.2 400.0 421.3 C398.1 428.4 396.2 437.6 395.0 446.3 C393.8 455.1 393.3 466.1 392.9 473.8 C392.5 481.5 392.5 486.5 392.5 492.5 C392.5 498.5 392.7 502.9 393.1 510.0 C393.5 517.1 394.1 525.6 395.0 535.0 C395.9 544.4 397.6 556.9 398.8 566.3 C400.1 575.7 401.2 583.8 402.5 591.3 C403.8 598.8 404.6 605.5 406.3 611.3 C408.0 617.1 410.2 621.5 412.5 626.3 C414.8 631.1 417.3 635.8 420.0 640.0 C422.7 644.2 425.9 648.2 428.8 651.3 C431.7 654.4 434.9 656.9 437.5 658.8 C440.1 660.7 443.2 661.9 444.4 662.5"/>
<path d="M444.4 662.5 C445.3 661.5 447.8 659.0 450.0 656.3 C452.2 653.6 455.5 649.0 457.5 646.3 C459.5 643.6 460.8 641.9 461.9 640.0 C462.9 638.1 463.2 637.5 463.8 635.0 C464.4 632.5 465.6 628.8 465.6 625.0 C465.6 621.2 464.1 616.2 463.8 612.5 C463.5 608.8 463.2 605.4 463.8 602.5 C464.4 599.6 465.4 597.9 467.5 595.0 C469.6 592.1 474.0 588.8 476.3 585.0 C478.6 581.2 479.4 577.1 481.3 572.5 C483.2 567.9 485.8 561.9 487.5 557.5 C489.2 553.1 490.6 551.1 491.3 546.3 C492.0 541.5 491.7 534.8 491.9 528.8 C492.1 522.8 492.4 515.0 492.3 510.0 C492.2 505.0 491.5 503.4 491.5 498.8 C491.5 494.2 491.9 487.1 492.5 482.5 C493.1 477.9 493.8 474.4 495.0 471.3 C496.2 468.2 497.9 465.8 500.0 463.8 C502.1 461.8 504.2 460.0 507.5 459.2 C510.8 458.4 516.0 458.9 520.0 459.0 C524.0 459.1 529.4 459.8 531.3 460.0"/>
<path d="M551.9 421.9 C550.8 423.5 547.3 427.9 545.0 431.3 C542.7 434.7 540.0 438.6 538.1 442.5 C536.2 446.4 535.0 451.2 533.8 455.0 C532.5 458.8 532.4 460.8 530.6 465.0 C528.8 469.2 525.5 474.8 523.1 480.0 C520.7 485.2 518.4 490.5 516.3 496.3 C514.2 502.1 512.1 509.6 510.6 515.0 C509.1 520.4 508.8 523.0 507.5 528.8 C506.2 534.6 504.7 543.1 503.1 550.0 C501.5 556.9 499.2 564.2 498.1 570.0 C497.0 575.8 497.2 578.8 496.3 585.0 C495.4 591.2 493.6 600.2 492.5 607.5 C491.4 614.8 490.2 622.5 489.4 628.8 C488.6 635.0 488.0 640.0 487.5 645.0 C487.0 650.0 487.0 653.0 486.3 658.8 C485.6 664.6 484.4 672.3 483.1 680.0 C481.9 687.7 480.4 697.5 478.8 705.0 C477.2 712.5 475.2 719.6 473.8 725.0 C472.4 730.4 470.8 734.2 470.6 737.5 C470.4 740.8 470.9 742.5 472.5 745.0 C474.1 747.5 476.2 750.2 480.0 752.5 C483.8 754.8 489.6 757.0 495.0 758.8 C500.4 760.6 506.4 761.6 512.5 763.1 C518.5 764.6 523.1 766.2 531.3 767.7 C539.5 769.2 551.1 771.0 561.5 772.4 C571.9 773.8 583.2 775.1 593.8 776.0 C604.4 776.9 612.9 777.4 625.0 777.6 C637.1 777.8 654.6 777.8 666.7 777.3 C678.8 776.8 689.9 775.3 697.5 774.4 C705.1 773.5 710.0 772.3 712.5 771.9"/>
<path d="M712.5 771.9 C711.7 767.4 709.2 754.3 707.5 745.0 C705.8 735.7 704.2 726.3 702.5 716.3 C700.8 706.3 699.0 694.4 697.5 685.0 C696.0 675.6 694.6 666.7 693.8 660.0 C693.0 653.3 692.9 650.2 692.5 645.0 C692.1 639.8 691.8 634.6 691.3 628.8 C690.8 623.0 689.8 616.2 689.4 610.0 C689.0 603.8 688.9 597.5 688.8 591.3 C688.7 585.0 689.2 578.8 689.0 572.5 C688.8 566.2 688.2 560.0 687.5 553.8 C686.8 547.5 685.6 541.5 685.0 535.0 C684.4 528.5 684.3 520.4 684.0 515.0 C683.7 509.6 683.6 506.7 683.1 502.5 C682.6 498.3 682.2 494.6 681.3 490.0 C680.4 485.4 679.0 479.8 677.5 475.0 C676.0 470.2 674.6 465.9 672.5 461.3 C670.4 456.7 667.5 451.7 665.0 447.5 C662.5 443.3 660.2 439.8 657.5 436.3 C654.8 432.8 651.7 429.3 648.8 426.3 C645.9 423.3 642.1 420.2 640.0 418.1 C637.9 416.0 636.9 414.3 636.3 413.5"/>
<path d="M808.8 441.9 C809.2 444.1 810.7 450.3 811.3 455.0 C811.9 459.7 812.2 465.0 812.5 470.0 C812.8 475.0 812.8 479.6 812.8 485.0 C812.8 490.4 812.4 498.3 812.3 502.5 C812.1 506.7 812.1 505.6 811.9 510.0 C811.7 514.4 811.8 522.1 811.3 528.8 C810.8 535.5 810.0 543.1 808.8 550.0 C807.5 556.9 805.9 563.8 803.8 570.0 C801.7 576.2 799.0 582.3 796.3 587.5 C793.6 592.7 790.2 597.5 787.5 601.3 C784.8 605.0 782.1 608.0 780.0 610.0 C777.9 612.0 776.6 612.8 775.0 613.1 C773.4 613.4 771.8 613.0 770.6 611.9 C769.5 610.8 768.7 609.7 768.1 606.3 C767.5 602.9 767.3 596.2 766.9 591.3 C766.5 586.4 766.5 580.6 765.8 577.0 C765.1 573.4 764.5 571.8 762.5 569.4 C760.5 567.0 756.7 565.1 753.8 562.5 C750.9 559.9 747.7 557.3 745.0 553.8 C742.3 550.3 740.0 545.3 737.5 541.3 C735.0 537.3 731.9 533.2 730.0 530.0 C728.1 526.8 727.1 524.5 726.0 522.0 C724.9 519.5 724.0 518.5 723.1 515.0 C722.2 511.6 721.4 505.9 720.6 501.3 C719.8 496.7 719.0 492.3 718.1 487.5 C717.2 482.7 716.0 477.1 715.0 472.5 C714.0 467.9 713.1 463.5 711.9 460.0 C710.6 456.5 709.5 454.0 707.5 451.3 C705.5 448.6 702.9 446.0 700.0 443.8 C697.1 441.6 693.8 439.6 690.0 438.1 C686.2 436.6 681.5 435.4 677.5 435.0 C673.5 434.6 669.0 434.9 666.3 435.6 C663.6 436.3 662.1 438.8 661.3 439.4"/>
<path d="M571.3 383.8 C570.2 384.4 567.7 386.2 565.0 387.5 C562.3 388.8 558.8 390.9 555.0 391.3 C551.2 391.7 545.6 391.1 542.5 390.0 C539.4 388.9 538.0 387.1 536.3 385.0 C534.6 382.9 533.2 380.4 532.5 377.5 C531.8 374.6 533.1 370.6 531.9 367.5 C530.6 364.4 526.6 362.1 525.0 358.8 C523.4 355.5 522.3 351.2 522.3 347.5 C522.3 343.8 523.5 340.1 525.0 336.3 C526.5 332.6 529.0 328.0 531.3 325.0 C533.6 322.0 536.6 319.5 538.8 318.1 C541.0 316.8 542.7 318.0 544.4 316.9 C546.1 315.8 546.8 312.9 548.8 311.3 C550.8 309.7 553.4 308.2 556.3 307.5 C559.2 306.8 563.2 306.4 566.3 306.9 C569.4 307.4 572.3 309.6 575.0 310.6 C577.7 311.6 579.8 312.4 582.5 313.1 C585.2 313.8 588.4 313.6 591.3 315.0 C594.2 316.4 597.5 318.8 600.0 321.3 C602.5 323.8 604.3 326.9 606.3 330.0 C608.3 333.1 610.7 336.7 611.9 340.0 C613.1 343.3 613.6 346.7 613.4 350.0 C613.2 353.3 612.1 356.9 610.6 360.0 C609.1 363.1 607.1 366.4 604.5 368.8 C601.9 371.2 596.6 373.5 595.0 374.4"/>
<path d="M549.4 328.8 C548.7 330.7 545.8 336.5 545.0 340.0 C544.2 343.5 544.8 346.9 544.4 350.0 C544.0 353.1 541.8 356.1 542.5 358.8 C543.2 361.5 545.9 363.4 548.8 366.3 C551.7 369.2 556.2 373.5 560.0 376.3 C563.8 379.1 567.8 381.7 571.3 383.1 C574.8 384.6 578.4 385.3 581.3 385.0 C584.2 384.7 586.9 383.4 588.8 381.3 C590.7 379.2 591.7 376.1 592.5 372.5 C593.3 368.9 594.0 364.2 593.8 360.0 C593.6 355.8 592.5 351.2 591.3 347.5 C590.0 343.8 588.4 340.4 586.3 337.5 C584.2 334.6 582.3 331.9 578.8 330.0 C575.2 328.1 568.8 326.7 565.0 326.3 C561.2 325.9 558.9 327.1 556.3 327.5 C553.7 327.9 550.5 328.6 549.4 328.8"/>
<path d="M548.1 351.9 C548.6 351.2 550.0 348.6 551.3 347.5 C552.5 346.4 554.9 345.4 555.6 345.0"/>
<path d="M568.1 337.5 C568.7 337.1 570.5 335.5 571.9 335.0 C573.3 334.5 575.6 334.5 576.3 334.4"/>
<path d="M551.9 360.6 C552.6 360.7 554.9 361.5 556.3 361.3 C557.6 361.1 559.0 360.1 560.0 359.4 C561.0 358.7 562.1 357.3 562.5 356.9"/>
<path d="M573.8 346.3 C574.4 346.4 576.2 347.1 577.5 346.9 C578.8 346.7 580.2 345.8 581.3 345.0 C582.3 344.2 583.4 342.4 583.8 341.9"/>
<path d="M563.8 352.5 C564.3 352.9 566.0 353.8 566.9 355.0 C567.8 356.2 568.7 358.5 569.4 360.0 C570.1 361.5 570.6 363.0 571.3 363.8 C572.0 364.6 573.4 364.6 573.8 364.8"/>
<path d="M571.9 371.3 C572.6 371.1 574.7 370.7 576.3 370.0 C577.9 369.3 580.5 367.8 581.3 367.3"/>
<path d="M576.9 373.5 L580.6 371.6"/>
<path d="M571.3 383.8 C571.7 385.1 573.3 389.0 573.8 391.3 C574.2 393.6 574.3 395.4 574.0 397.5 C573.7 399.6 572.3 402.6 572.0 403.6"/>
<path d="M593.1 373.8 C593.6 375.1 595.1 378.8 596.3 381.3 C597.4 383.8 598.6 386.4 600.0 388.8 C601.4 391.2 603.8 394.4 604.5 395.5"/>
<path d="M541.3 395.0 C543.0 395.4 547.3 396.9 551.3 397.5 C555.2 398.1 561.9 398.3 565.0 398.8 C568.1 399.3 568.8 399.8 570.0 400.6 C571.2 401.4 571.7 403.1 572.0 403.6"/>
<path d="M572.0 403.6 C573.8 403.4 578.7 403.3 582.5 402.5 C586.3 401.7 591.5 400.1 595.0 398.8 C598.5 397.6 601.7 396.2 603.8 395.0 C605.9 393.8 606.9 391.9 607.5 391.3"/>
<path d="M548.8 426.9 C550.2 427.6 554.0 429.9 557.5 431.3 C561.0 432.7 566.7 434.1 570.0 435.0 C573.3 435.9 576.2 436.2 577.5 436.5 L576.9 447.5"/>
<path d="M545.0 431.3 C546.5 432.1 550.5 434.6 553.8 436.3 C557.1 438.0 562.1 440.1 565.0 441.3 C567.9 442.6 570.2 443.4 571.3 443.8 L570.4 493"/>
<path d="M546.7 433.0 C546.8 433.5 547.2 435.0 547.7 435.8 C548.1 436.6 548.6 437.3 549.3 437.7 C550.0 438.0 551.1 438.0 551.9 438.2 C552.7 438.4 553.8 438.2 554.4 438.8 C555.0 439.3 555.1 440.7 555.6 441.4 C556.1 442.1 556.8 442.5 557.5 442.8 C558.3 443.0 559.5 442.7 560.3 442.9 C561.1 443.1 561.7 443.4 562.4 443.9 C563.0 444.4 563.6 445.5 564.3 445.9 C565.0 446.3 566.2 446.3 566.6 446.4"/>
<path d="M566.9 445.6 C566.8 446.1 566.0 447.5 566.0 448.5 C566.0 449.5 566.6 450.5 566.9 451.5 C567.1 452.4 567.7 453.4 567.6 454.4 C567.6 455.4 566.9 456.4 566.6 457.3 C566.4 458.3 565.8 459.3 565.9 460.2 C565.9 461.2 566.6 462.2 566.8 463.2 C567.1 464.2 567.5 465.2 567.5 466.1 C567.4 467.1 566.7 468.1 566.4 469.0 C566.1 470.0 565.7 471.0 565.7 472.0 C565.8 472.9 566.5 473.9 566.8 474.9 C567.0 475.9 567.4 476.9 567.3 477.9 C567.2 478.8 566.4 479.8 566.1 480.8 C565.9 481.7 565.5 482.7 565.6 483.7 C565.7 484.7 566.5 485.7 566.7 486.6 C567.0 487.6 567.2 488.6 567.1 489.6 C567.0 490.6 566.1 492.0 565.9 492.5"/>
<path d="M640.6 420.0 C639.9 420.6 638.5 422.3 636.3 423.8 C634.1 425.3 631.0 427.0 627.5 428.8 C624.0 430.6 619.0 432.8 615.0 434.4 C611.0 436.0 605.7 437.9 603.8 438.6 L603.8 447.5"/>
<path d="M645.0 422.8 C644.6 423.2 644.4 423.7 642.5 425.0 C640.6 426.3 637.3 428.7 633.8 430.6 C630.3 432.5 625.5 434.5 621.3 436.3 C617.1 438.1 611.2 440.1 608.8 441.3 C606.4 442.6 607.2 443.4 606.9 443.8 L606.7 492.5"/>
<path d="M647.9 426.7 C647.9 427.2 647.9 428.8 647.7 429.6 C647.4 430.5 647.1 431.3 646.6 431.8 C646.0 432.4 645.1 432.6 644.4 433.0 C643.6 433.4 642.4 433.4 641.9 434.0 C641.5 434.7 642.0 436.1 641.6 436.9 C641.2 437.7 640.3 438.6 639.6 438.8 C638.8 439.1 637.8 438.5 637.0 438.4 C636.1 438.4 635.3 438.3 634.6 438.7 C633.9 439.0 633.4 440.3 632.8 440.7 C632.1 441.2 631.3 441.5 630.5 441.5 C629.7 441.6 628.7 441.0 627.9 441.0 C627.1 441.1 626.4 441.5 625.7 442.0 C625.1 442.5 624.6 443.5 624.0 444.0 C623.3 444.4 622.5 444.6 621.7 444.6 C620.9 444.6 619.7 443.8 619.0 443.9 C618.2 444.1 617.6 444.9 617.0 445.5 C616.3 446.0 615.8 446.9 615.1 447.2 C614.4 447.6 613.1 447.5 612.7 447.6"/>
<path d="M612.5 446.9 C612.4 447.4 611.6 448.9 611.7 449.9 C611.7 451.0 612.4 452.0 612.7 453.0 C612.9 454.0 613.4 455.0 613.3 456.0 C613.2 457.0 612.5 458.0 612.2 459.1 C611.9 460.1 611.6 461.1 611.7 462.1 C611.9 463.1 612.7 464.1 612.9 465.1 C613.2 466.2 613.4 467.2 613.2 468.2 C613.0 469.2 612.2 470.2 611.9 471.2 C611.7 472.2 611.7 473.2 611.9 474.3 C612.1 475.3 613.0 476.3 613.2 477.3 C613.3 478.3 613.2 479.3 613.0 480.3 C612.7 481.4 611.9 482.4 611.7 483.4 C611.6 484.4 611.9 485.4 612.2 486.4 C612.4 487.4 613.2 488.4 613.3 489.5 C613.4 490.5 612.8 492.0 612.7 492.5"/>
<path d="M588.8 410.0 L596.3 416.3 L590.0 422.5 L582.5 433.8 L589.4 442.5 L599.4 456.3 L588.8 465.6 L579.4 480.6 L590.6 493.1"/>
<path d="M588.8 410.0 L582.5 416.3 L590.0 422.5 L597.5 435.0 L589.4 442.5 L581.3 457.5 L588.8 465.6 L601.3 482.5 L590.6 493.1"/>
<path d="M579.4 406.3 L583.8 408.8 L580.0 412.5Z"/>
<path d="M590.0 404.4 L594.4 402.5 L595.6 408.8Z"/>
<path d="M580.6 422.5 L585.0 425.6 L580.6 428.8Z"/>
<path d="M594.4 423.8 L598.8 420.0 L598.8 428.1Z"/>
<path d="M581.3 441.3 L585.6 445.0 L581.9 448.8Z"/>
<path d="M595.6 445.0 L600.0 441.3 L600.0 448.8Z"/>
<path d="M579.4 462.5 L584.4 467.5 L580.0 471.9Z"/>
<path d="M596.3 466.3 L601.3 461.9 L601.3 471.3Z"/>
<path d="M534.4 479.4 C535.3 480.3 537.6 483.2 540.0 485.0 C542.4 486.8 545.2 488.6 548.8 490.0 C552.3 491.4 556.7 492.4 561.3 493.1 C565.9 493.8 571.5 494.2 576.3 494.4 C581.1 494.6 585.9 494.6 590.0 494.3 C594.1 494.0 599.0 492.8 600.8 492.5"/>
<path d="M601.3 492.5 C603.3 492.5 609.2 492.7 613.3 492.6 C617.4 492.5 621.9 492.7 625.8 492.1 C629.7 491.5 633.3 490.5 636.7 488.8 C640.1 487.1 643.0 484.1 646.0 482.0 C649.0 479.9 653.0 477.2 654.4 476.3"/>
<path d="M523.1 535.0 C524.7 536.5 529.3 541.0 532.5 543.8 C535.7 546.6 538.8 549.5 542.5 551.9 C546.2 554.3 550.8 556.3 555.0 558.1 C559.2 559.9 563.8 561.4 567.5 562.5 C571.2 563.6 574.6 564.4 577.5 564.8 C580.4 565.2 583.8 565.0 585.0 565.0"/>
<path d="M677.9 513.8 C677.4 515.1 676.3 518.7 675.0 521.7 C673.7 524.7 672.0 528.4 670.0 531.7 C668.0 535.0 665.8 538.7 663.3 541.7 C660.8 544.8 657.8 547.8 655.0 550.0 C652.2 552.2 649.8 553.3 646.7 555.0 C643.7 556.7 639.8 558.4 636.7 560.0 C633.6 561.6 631.5 564.0 628.3 564.8 C625.1 565.6 621.0 565.2 617.5 565.0 C614.0 564.8 610.1 564.2 607.5 563.8 C604.9 563.4 602.7 562.7 601.7 562.5"/>
<path d="M677.5 513.8 L673.8 525.0"/>
<path d="M573.0 496.3 C572.8 496.8 572.1 498.2 572.0 499.1 C572.0 500.1 572.5 501.1 572.8 502.1 C573.0 503.0 573.5 504.0 573.5 505.0 C573.4 505.9 572.8 506.9 572.5 507.8 C572.1 508.8 571.5 509.7 571.5 510.7 C571.5 511.6 572.0 512.6 572.3 513.6 C572.5 514.6 573.0 515.5 573.0 516.5 C572.9 517.5 572.3 518.4 571.9 519.3 C571.6 520.3 571.0 521.2 571.0 522.2 C571.0 523.1 571.5 524.1 571.8 525.1 C572.0 526.1 572.5 527.1 572.4 528.0 C572.4 529.0 571.8 529.9 571.5 530.9 C571.3 531.8 570.8 532.8 570.9 533.8 C571.0 534.7 571.6 535.7 572.0 536.6 C572.3 537.5 572.9 538.5 572.9 539.4 C573.0 540.4 572.4 541.4 572.2 542.4 C572.0 543.3 571.5 544.3 571.6 545.3 C571.7 546.2 572.3 547.2 572.7 548.1 C573.0 549.1 573.6 550.0 573.6 550.9 C573.7 551.9 573.1 552.9 572.9 553.9 C572.7 554.8 572.2 555.8 572.3 556.8 C572.4 557.8 573.1 558.7 573.4 559.6 C573.7 560.6 574.2 562.0 574.3 562.4"/>
<path d="M582.5 494.6 L585.0 565.0"/>
<path d="M601.3 492.5 L603.3 562.5"/>
<path d="M611.3 495.4 C611.2 495.9 610.5 497.4 610.5 498.3 C610.5 499.3 611.1 500.3 611.4 501.2 C611.7 502.2 612.2 503.2 612.2 504.1 C612.2 505.1 611.6 506.1 611.3 507.1 C611.0 508.0 610.5 509.0 610.5 510.0 C610.6 511.0 611.2 511.9 611.5 512.9 C611.8 513.9 612.3 514.8 612.3 515.8 C612.2 516.8 611.6 517.8 611.3 518.7 C611.0 519.7 610.6 520.7 610.6 521.7 C610.7 522.6 611.4 523.6 611.7 524.6 C612.0 525.5 612.4 526.5 612.3 527.5 C612.2 528.5 611.5 529.4 611.3 530.4 C611.0 531.4 610.6 532.4 610.7 533.3 C610.8 534.3 611.5 535.3 611.8 536.2 C612.1 537.2 612.5 538.2 612.4 539.2 C612.3 540.1 611.5 541.1 611.3 542.1 C611.0 543.1 610.7 544.0 610.8 545.0 C610.9 546.0 611.7 546.9 612.0 547.9 C612.2 548.9 612.5 549.9 612.4 550.8 C612.3 551.8 611.5 552.8 611.3 553.8 C611.0 554.7 610.8 555.7 610.9 556.7 C611.1 557.6 611.8 558.6 612.1 559.6 C612.4 560.6 612.4 562.0 612.4 562.5"/>
<path d="M590.0 494.6 C590.8 495.0 593.5 495.9 594.5 497.0 C595.5 498.1 596.0 500.1 596.0 501.5 C596.0 502.9 595.5 504.6 594.5 505.5 C593.5 506.4 591.5 506.9 590.0 507.1 C588.5 507.3 586.2 506.6 585.4 506.5"/>
<path d="M592.5 508.3 L600.5 508.3"/>
<path d="M573.1 565.6 C572.6 570.9 571.0 587.0 570.0 597.5 C569.0 608.0 567.6 620.9 566.9 628.8 C566.2 636.7 566.3 637.9 565.6 645.0 C564.9 652.1 563.4 662.8 562.5 671.3 C561.6 679.8 560.7 690.7 560.0 696.3 C559.3 701.9 558.4 703.5 558.1 705.0"/>
<path d="M608.8 565.0 C609.2 570.4 610.6 586.9 611.3 597.5 C612.0 608.1 612.7 620.9 613.1 628.8 C613.5 636.7 613.6 639.8 613.8 645.0 C614.0 650.2 614.2 652.3 614.4 660.0 C614.6 667.7 614.7 684.0 615.0 691.3 C615.3 698.6 615.5 700.7 616.3 703.8 C617.1 706.9 619.4 709.0 620.0 710.0"/>
<path d="M560.0 561.3 C559.8 561.8 558.8 563.1 558.7 564.0 C558.5 565.0 558.9 566.1 559.1 567.1 C559.2 568.1 559.5 569.1 559.4 570.1 C559.2 571.0 558.4 571.9 558.0 572.8 C557.6 573.7 557.1 574.7 557.1 575.7 C557.1 576.7 557.7 577.7 557.9 578.6 C558.2 579.6 558.6 580.6 558.5 581.6 C558.4 582.6 557.7 583.5 557.4 584.5 C557.0 585.4 556.5 586.4 556.6 587.3 C556.6 588.3 557.2 589.3 557.4 590.3 C557.7 591.3 558.0 592.3 557.9 593.3 C557.8 594.2 557.1 595.2 556.7 596.1 C556.4 597.1 556.0 598.0 556.0 599.0 C556.0 600.0 556.6 601.0 556.8 602.0 C557.0 603.0 557.3 604.0 557.1 604.9 C557.0 605.9 556.1 606.8 555.8 607.8 C555.5 608.7 555.1 609.6 555.1 610.6 C555.2 611.6 555.8 612.6 556.0 613.6 C556.2 614.6 556.4 615.6 556.2 616.6 C556.0 617.5 555.2 618.4 554.8 619.4 C554.5 620.3 554.2 621.3 554.3 622.3 C554.3 623.3 555.0 624.3 555.2 625.3 C555.4 626.3 555.5 627.2 555.2 628.2 C555.0 629.2 554.1 630.1 553.8 631.0 C553.5 632.0 553.3 632.9 553.3 633.9 C553.4 634.9 554.1 635.9 554.3 636.9 C554.4 637.9 554.5 638.9 554.2 639.8 C554.0 640.8 553.1 641.7 552.8 642.6 C552.5 643.6 552.3 644.6 552.4 645.5 C552.5 646.5 553.2 647.6 553.4 648.5 C553.5 649.5 553.5 650.5 553.2 651.5 C552.9 652.4 552.1 653.3 551.8 654.3 C551.5 655.2 551.4 656.2 551.5 657.2 C551.6 658.2 552.4 659.2 552.5 660.2 C552.6 661.2 552.5 662.2 552.2 663.1 C551.9 664.0 551.0 664.9 550.7 665.8 C550.4 666.8 550.2 667.7 550.3 668.7 C550.3 669.7 550.9 670.8 550.9 671.8 C550.9 672.8 550.6 673.7 550.2 674.6 C549.8 675.6 548.8 676.4 548.5 677.3 C548.2 678.2 548.1 679.2 548.2 680.2 C548.3 681.2 549.0 682.3 549.0 683.2 C549.1 684.2 548.8 685.2 548.5 686.1 C548.1 687.1 547.3 688.0 547.0 688.9 C546.8 689.9 547.1 691.4 547.1 691.9"/>
<path d="M621.3 566.3 C621.2 566.8 620.5 568.3 620.5 569.2 C620.5 570.2 621.1 571.2 621.4 572.1 C621.7 573.1 622.2 574.1 622.2 575.1 C622.2 576.0 621.6 577.0 621.3 578.0 C621.0 579.0 620.5 579.9 620.6 580.9 C620.6 581.9 621.3 582.9 621.5 583.8 C621.8 584.8 622.3 585.8 622.3 586.7 C622.2 587.7 621.6 588.7 621.3 589.7 C621.0 590.6 620.6 591.6 620.6 592.6 C620.7 593.6 621.4 594.5 621.7 595.5 C622.0 596.5 622.4 597.4 622.3 598.4 C622.3 599.4 621.5 600.4 621.3 601.3 C621.0 602.3 620.7 603.3 620.8 604.3 C620.8 605.2 621.6 606.2 621.9 607.2 C622.1 608.2 622.5 609.1 622.4 610.1 C622.3 611.1 621.6 612.1 621.3 613.0 C621.0 614.0 620.8 615.0 620.9 616.0 C621.0 616.9 621.8 617.9 622.0 618.9 C622.3 619.8 622.6 620.8 622.5 621.8 C622.3 622.8 621.6 623.7 621.3 624.7 C621.1 625.7 620.9 626.7 621.0 627.6 C621.2 628.6 622.0 629.6 622.2 630.5 C622.5 631.5 622.7 632.5 622.5 633.5 C622.4 634.4 621.6 635.4 621.3 636.4 C621.1 637.4 621.0 638.3 621.2 639.3 C621.3 640.3 622.2 641.3 622.4 642.2 C622.6 643.2 622.7 644.1 622.6 645.1 C622.5 646.0 621.9 647.1 621.8 648.1 C621.8 649.1 621.9 650.1 622.2 651.0 C622.5 652.0 623.5 652.8 623.8 653.7 C624.2 654.7 624.4 655.6 624.3 656.6 C624.3 657.6 623.6 658.7 623.6 659.7 C623.5 660.7 623.7 661.6 624.0 662.6 C624.4 663.5 625.4 664.3 625.7 665.3 C626.0 666.2 626.0 667.2 625.9 668.2 C625.8 669.2 625.1 670.3 625.0 671.2 C625.0 672.2 625.2 673.2 625.5 674.1 C625.8 675.1 626.8 675.9 627.0 676.9 C627.3 677.8 627.3 678.8 627.2 679.8 C627.0 680.8 626.3 681.9 626.3 682.9 C626.3 683.8 626.5 684.8 626.9 685.7 C627.2 686.7 628.1 687.5 628.4 688.5 C628.6 689.4 628.5 690.4 628.4 691.4 C628.3 692.4 627.7 693.6 627.8 694.5 C627.9 695.5 628.4 696.4 628.9 697.3 C629.4 698.1 630.4 699.4 630.8 699.8"/>
<path d="M598.8 559.4 L590.0 565.0 L576.9 580.6 L591.3 597.5 L609.4 621.9 L592.5 642.5 L569.4 658.8 L587.5 682.5 L605.0 703.8 L596.3 715.0"/>
<path d="M583.0 560.0 L590.0 565.0 L604.4 583.1 L591.3 597.5 L574.4 617.5 L592.5 642.5 L608.1 663.8 L587.5 682.5 L571.9 698.8 L583.8 716.3"/>
<path d="M576.3 566.3 L583.1 567.5 L576.3 573.1Z"/>
<path d="M598.8 566.3 L606.9 565.0 L607.5 574.4Z"/>
<path d="M574.4 591.3 L582.5 599.4 L573.5 606.3Z"/>
<path d="M596.3 598.8 L605.0 591.9 L604.4 607.5Z"/>
<path d="M571.9 626.9 L581.3 637.5 L571.3 645.0Z"/>
<path d="M598.1 638.8 L606.3 630.0 L605.6 645.0Z"/>
<path d="M566.3 670.6 L579.4 681.3 L565.6 689.4Z"/>
<path d="M598.1 682.5 L608.8 673.8 L609.4 693.8Z"/>
<path d="M563.8 702.5 L575.6 715.0 L565.0 713.1Z"/>
<path d="M600.0 716.3 L611.9 707.5 L611.9 718.1Z"/>
<path d="M482.9 682.1 C483.5 681.8 485.2 680.7 486.3 680.3 C487.4 679.9 488.5 679.5 489.5 679.7 C490.6 680.0 491.7 680.8 492.6 681.5 C493.5 682.3 493.9 684.1 494.9 684.4 C495.9 684.7 497.4 683.5 498.5 683.3 C499.7 683.1 500.8 682.9 501.8 683.1 C502.8 683.4 503.8 684.0 504.7 684.7 C505.6 685.4 506.1 687.1 507.1 687.4 C508.1 687.7 509.6 686.6 510.8 686.6 C511.9 686.5 513.0 686.6 514.0 687.0 C515.0 687.4 515.6 688.4 516.6 689.1 C517.5 689.8 518.5 691.2 519.5 691.2 C520.5 691.1 521.5 689.5 522.6 689.0 C523.6 688.5 524.6 688.1 525.7 688.1 C526.7 688.1 527.8 688.6 528.9 689.1 C529.9 689.5 530.9 690.7 532.0 690.7 C533.0 690.7 534.2 689.2 535.2 688.8 C536.3 688.4 537.4 688.2 538.4 688.4 C539.5 688.5 540.6 689.1 541.6 689.7 C542.5 690.3 543.1 691.8 544.2 692.0 C545.2 692.3 547.2 691.2 547.8 691.0"/>
<path d="M483.1 695.0 C485.9 695.3 493.0 695.6 500.0 696.9 C507.0 698.1 517.7 701.2 525.0 702.5 C532.3 703.8 538.3 704.0 543.8 704.4 C549.3 704.8 555.7 704.9 558.1 705.0"/>
<path d="M483.1 702.3 C485.9 703.1 493.0 705.2 500.0 706.9 C507.0 708.6 516.7 710.8 525.0 712.5 C533.3 714.2 541.7 715.6 550.0 716.9 C558.3 718.1 566.7 719.2 575.0 720.0 C583.3 720.8 591.7 721.3 600.0 721.9 C608.3 722.5 615.0 723.0 625.0 723.5 C635.0 724.0 650.0 724.8 660.0 725.0 C670.0 725.2 678.1 725.0 685.0 724.8 C691.9 724.5 698.6 723.7 701.3 723.5"/>
<path d="M620.0 710.0 C622.5 710.3 628.3 711.3 635.0 711.9 C641.7 712.5 651.7 713.3 660.0 713.8 C668.3 714.3 679.2 714.9 685.0 715.0 C690.8 715.1 692.8 714.7 695.0 714.4 C697.2 714.1 697.6 713.3 698.1 713.1"/>
<path d="M630.5 699.1 C631.0 699.3 632.7 699.6 633.5 700.2 C634.4 700.9 634.9 702.3 635.8 703.0 C636.7 703.7 637.8 704.5 638.9 704.4 C639.9 704.4 641.1 703.1 642.2 702.8 C643.3 702.5 644.4 702.6 645.5 702.9 C646.5 703.2 647.6 704.5 648.6 704.8 C649.7 705.1 650.8 704.9 651.9 704.6 C653.0 704.3 654.1 703.3 655.2 703.1 C656.3 702.9 657.4 703.0 658.4 703.4 C659.5 703.7 660.6 705.1 661.7 705.3 C662.8 705.5 663.9 704.7 665.0 704.3 C666.1 703.9 667.1 703.2 668.2 703.0 C669.3 702.9 670.4 703.1 671.5 703.5 C672.6 704.0 673.7 705.5 674.8 705.5 C675.9 705.6 676.9 704.2 678.0 703.7 C679.1 703.2 680.1 702.7 681.2 702.6 C682.3 702.6 683.5 702.9 684.5 703.4 C685.6 703.9 686.5 705.6 687.6 705.7 C688.7 705.7 690.0 704.3 691.1 703.9 C692.3 703.6 693.4 703.4 694.4 703.6 C695.5 703.9 697.0 705.0 697.5 705.2"/>
<path d="M483.1 710.0 L490.0 720.0 L500.0 732.5 L518.8 747.5 L532.5 737.5 L552.5 723.1 L568.8 737.5 L590.0 757.5 L606.9 741.9 L629.4 728.1 L649.4 741.9 L670.0 760.0 L685.0 745.0 L700.6 728.8"/>
<path d="M479.4 740.0 L497.5 728.1 L513.8 717.5 L532.5 736.3 L546.3 752.5 L568.8 736.3 L589.4 724.4 L606.3 741.3 L627.5 760.6 L649.4 741.3 L667.5 728.1 L685.0 745.0 L705.6 761.5"/>
<path d="M561.5 772.4 C561.2 773.5 561.1 777.2 559.9 779.2 C558.7 781.2 556.7 783.0 554.2 784.4 C551.7 785.8 547.1 786.3 544.8 787.5 C542.4 788.7 540.3 790.2 540.1 791.7 C539.9 793.2 540.4 795.2 543.8 796.4 C547.2 797.6 555.5 798.6 560.4 798.8 C565.2 799.0 569.7 798.4 572.9 797.4 C576.1 796.4 578.3 794.9 579.7 792.7 C581.1 790.5 581.2 787.4 581.3 784.4 C581.3 781.4 580.2 776.1 580.0 774.5"/>
<path d="M620.6 777.6 C620.3 778.4 620.1 780.7 618.8 782.3 C617.4 783.9 614.8 785.4 612.5 787.0 C610.2 788.6 606.4 790.2 605.2 791.7 C604.0 793.2 604.3 794.7 605.2 795.8 C606.1 796.9 607.5 798.0 610.4 798.4 C613.3 798.8 619.4 799.3 622.9 798.4 C626.4 797.5 628.9 794.7 631.3 792.7 C633.7 790.7 636.3 788.4 637.5 786.5 C638.7 784.6 638.5 782.8 638.5 781.3 C638.5 779.8 637.7 778.0 637.5 777.3"/>
</g>
<g fill="none" stroke="#2a2a2a" stroke-width="2" stroke-linecap="round">
<path d="M572.2 403.5 L551.9 421.9"/>
</g>
<g fill="none" stroke="#4a86b0" stroke-width="1.3">
<path d="M536.0 395.0 C535.0 394.3 532.7 393.1 530.0 390.6 C527.3 388.1 523.3 384.5 520.0 380.0 C516.7 375.5 512.7 369.6 510.0 363.8 C507.3 358.0 505.1 351.1 503.8 345.0 C502.6 338.9 502.1 333.3 502.5 327.5 C502.9 321.7 504.0 315.2 506.3 310.0 C508.6 304.8 512.1 300.7 516.3 296.3 C520.5 291.9 526.1 287.4 531.3 283.8 C536.5 280.2 541.7 277.1 547.5 275.0 C553.3 272.9 560.0 271.3 566.3 271.0 C572.5 270.7 579.1 271.9 585.0 273.1 C590.9 274.3 596.5 274.9 601.5 278.4 C606.5 281.8 610.5 287.6 615.0 293.8 C619.5 300.0 625.7 308.5 628.5 315.4 C631.3 322.3 631.6 329.0 631.9 335.0 C632.2 341.0 631.5 346.5 630.4 351.3 C629.2 356.1 627.4 359.9 625.0 363.8 C622.6 367.8 618.9 371.5 616.3 375.0 C613.7 378.5 611.4 382.1 609.4 385.0 C607.4 387.9 605.2 391.2 604.4 392.5"/>
<path d="M604.4 392.5 C605.3 393.8 607.0 397.5 610.0 400.0 C613.0 402.5 618.1 405.2 622.5 407.5 C626.9 409.8 634.0 412.5 636.3 413.5"/>
<path d="M636.3 413.5 C637.6 412.7 641.5 410.8 644.4 408.8 C647.3 406.8 651.0 404.1 653.8 401.3 C656.6 398.6 659.2 395.6 661.3 392.3 C663.4 389.0 664.6 385.8 666.3 381.3 C668.0 376.8 670.1 370.5 671.5 365.3 C672.9 360.1 673.8 355.4 674.6 350.4 C675.4 345.4 675.7 340.1 676.5 335.4 C677.3 330.7 678.4 326.0 679.4 322.3 C680.4 318.6 681.1 315.9 682.5 313.1 C683.9 310.3 685.2 307.5 687.5 305.4 C689.8 303.3 692.5 301.6 696.5 300.4 C700.5 299.2 707.9 298.7 711.3 298.4 C714.7 298.1 714.4 298.1 716.9 298.8 C719.4 299.5 722.7 300.5 726.3 302.3 C729.9 304.1 734.9 306.9 738.4 309.4 C741.9 311.9 744.1 314.5 747.5 317.5 C750.9 320.5 755.0 323.5 758.8 327.5 C762.6 331.5 767.6 337.3 770.4 341.3 C773.2 345.3 772.2 345.5 775.4 351.3 C778.6 357.1 786.2 370.1 789.4 376.3 C792.6 382.5 793.0 384.9 794.4 388.4 C795.8 391.9 796.0 393.0 797.5 397.3 C799.0 401.6 801.7 408.8 803.5 414.4 C805.3 420.0 807.3 428.2 808.1 431.0"/>
<path d="M716.5 289.4 L716.9 298.8" stroke-width="1"/>
</g>
<g fill="#f2fbff" stroke="#3784b3" stroke-width="1.2">
<rect x="528.5" y="281.6" width="5.6" height="5.6"/>
<rect x="598.7" y="275.6" width="5.6" height="5.6"/>
<rect x="625.7" y="312.6" width="5.6" height="5.6"/>
<rect x="627.6" y="348.5" width="5.6" height="5.6"/>
<rect x="606.6" y="382.5" width="5.6" height="5.6"/>
<rect x="607.8" y="391.6" width="5.6" height="5.6"/>
<rect x="601.6" y="399.5" width="5.6" height="5.6"/>
<rect x="501.6" y="324.7" width="5.6" height="5.6"/>
<rect x="633.5" y="410.7" width="5.6" height="5.6"/>
<rect x="641.6" y="406.5" width="5.6" height="5.6"/>
<rect x="658.7" y="389.6" width="5.6" height="5.6"/>
<rect x="656.6" y="379.5" width="5.6" height="5.6"/>
<rect x="668.7" y="362.5" width="5.6" height="5.6"/>
<rect x="671.8" y="347.6" width="5.6" height="5.6"/>
<rect x="673.7" y="332.6" width="5.6" height="5.6"/>
<rect x="664.7" y="327.6" width="5.6" height="5.6"/>
<rect x="676.6" y="319.5" width="5.6" height="5.6"/>
<rect x="679.7" y="310.3" width="5.6" height="5.6"/>
<rect x="684.7" y="302.6" width="5.6" height="5.6"/>
<rect x="693.7" y="297.6" width="5.6" height="5.6"/>
<rect x="708.5" y="295.6" width="5.6" height="5.6"/>
<rect x="713.7" y="286.6" width="5.6" height="5.6"/>
<rect x="723.5" y="299.5" width="5.6" height="5.6"/>
<rect x="735.6" y="306.6" width="5.6" height="5.6"/>
<rect x="744.7" y="314.7" width="5.6" height="5.6"/>
<rect x="767.6" y="338.5" width="5.6" height="5.6"/>
<rect x="772.6" y="348.5" width="5.6" height="5.6"/>
<rect x="786.6" y="373.5" width="5.6" height="5.6"/>
<rect x="791.6" y="385.6" width="5.6" height="5.6"/>
<rect x="794.7" y="394.5" width="5.6" height="5.6"/>
<rect x="800.7" y="411.6" width="5.6" height="5.6"/>
<path d="M530.2 390.8 L541.2 390.6 L538.6 399.4Z"/>
<path d="M803.8 430.8 L813.4 430.6 L808.7 441.8Z"/>
</g>
</svg>
<!-- ===== docker: align & distribute (x 1503-1868) ===== -->
<div class="a" style="left:1503px;top:140px;width:1px;height:848px;background:#d2d2d2"></div>
<div class="a" style="left:1504px;top:140px;width:392px;height:848px;background:#f3f3f3"></div>
<div class="a" style="left:1504px;top:140px;width:2px;height:848px;background:#fefefe"></div>
<div class="a" style="left:1506px;top:140px;width:389px;height:27px;background:#e9e9e9"></div>
<span class="t" style="letter-spacing:-0.123px;left:1512px;top:144px;font-size:13px;color:#111">Выровнять и распределить</span>
<svg style="left:1850px;top:148px" width="14" height="12" viewBox="0 0 14 12"><path d="M.5 .5 L6.5 6 L.5 11.5Z M7 .5 L13 6 L7 11.5Z" fill="#a6a6a6"/></svg>
<svg style="left:1876px;top:148px" width="12" height="12" viewBox="0 0 12 12"><path d="M1 1 L11 11 M11 1 L1 11" stroke="#b2b2b2" stroke-width="2.200"/></svg>
<span class="t" style="letter-spacing:-0.668px;left:1510px;top:171px;font-size:13.5px;font-weight:bold;color:#000">Выровнять</span>
<!-- align icons row y 207-227 -->
<svg style="left:1513px;top:206px" width="22" height="22" viewBox="0 0 22 22">
 <path d="M1.5 0 V22" stroke="#3aa0cc" stroke-width="1.2" stroke-dasharray="2.4 1.4"/><rect x="3.6" y="5" width="16.5" height="4.6" fill="#f3f3f3" stroke="#333" stroke-width="1.3"/><rect x="3.6" y="12.4" width="10.5" height="4.6" fill="#f3f3f3" stroke="#333" stroke-width="1.3"/>
</svg>
<svg style="left:1546px;top:206px" width="22" height="22" viewBox="0 0 22 22">
 <rect x="1.6" y="5" width="17.5" height="4.6" fill="#f3f3f3" stroke="#333" stroke-width="1.3"/><rect x="5" y="12.4" width="10.5" height="4.6" fill="#f3f3f3" stroke="#333" stroke-width="1.3" stroke-dasharray="3 1.2"/><path d="M10.3 0 V22" stroke="#3aa0cc" stroke-width="1.2" stroke-dasharray="2.4 1.4"/>
</svg>
<svg style="left:1579px;top:206px" width="22" height="22" viewBox="0 0 22 22">
 <path d="M20.5 0 V22" stroke="#3aa0cc" stroke-width="1.2" stroke-dasharray="2.4 1.4"/><rect x="1.8" y="5" width="16.5" height="4.6" fill="#f3f3f3" stroke="#333" stroke-width="1.3"/><rect x="7.8" y="12.4" width="10.5" height="4.6" fill="#f3f3f3" stroke="#333" stroke-width="1.3"/>
</svg>
<svg style="left:1645px;top:206px" width="22" height="22" viewBox="0 0 22 22">
 <path d="M0 1.5 H22" stroke="#3aa0cc" stroke-width="1.2" stroke-dasharray="2.4 1.4"/><rect x="5" y="3.6" width="4.6" height="16.5" fill="#f3f3f3" stroke="#333" stroke-width="1.3"/><rect x="12.4" y="3.6" width="4.6" height="10.5" fill="#f3f3f3" stroke="#333" stroke-width="1.3"/>
</svg>
<svg style="left:1678px;top:206px" width="22" height="22" viewBox="0 0 22 22">
 <rect x="5" y="1.6" width="4.6" height="17.5" fill="#f3f3f3" stroke="#333" stroke-width="1.3"/><rect x="12.4" y="5" width="4.6" height="10.5" fill="#f3f3f3" stroke="#333" stroke-width="1.3" stroke-dasharray="3 1.2"/><path d="M0 10.3 H22" stroke="#3aa0cc" stroke-width="1.2" stroke-dasharray="2.4 1.4"/>
</svg>
<svg style="left:1711px;top:206px" width="22" height="22" viewBox="0 0 22 22">
 <path d="M0 20.5 H22" stroke="#3aa0cc" stroke-width="1.2" stroke-dasharray="2.4 1.4"/><rect x="5" y="1.8" width="4.6" height="16.5" fill="#f3f3f3" stroke="#333" stroke-width="1.3"/><rect x="12.4" y="7.8" width="4.6" height="10.5" fill="#f3f3f3" stroke="#333" stroke-width="1.3"/>
</svg>
<span class="t" style="letter-spacing:-0.186px;left:1513px;top:254px;font-size:13px;color:#111">Выровнять узлы:</span>
<!-- align-to icons y 252-272 -->
<svg style="left:1637px;top:252px" width="21" height="21" viewBox="0 0 21 21">
 <rect x="6.500" y=".800" width="13" height="13" fill="#d9eef8" stroke="#3a9cc8" stroke-width="1.400"/><rect x=".800" y="6.500" width="13" height="13" fill="#e6f4fb" stroke="#333" stroke-width="1.400"/><rect x="2.700" y="8.400" width="9.200" height="9.200" fill="#d4ecf8" stroke="#3a9cc8" stroke-width="1.200"/>
</svg>
<svg style="left:1670px;top:252px" width="21" height="21" viewBox="0 0 21 21">
 <rect x=".8" y=".8" width="18.8" height="18.8" fill="#f7f7f7" stroke="#333" stroke-width="1.5"/><path d="M10.2 3 L12.4 6 H8Z M10.2 17.4 L12.4 14.4 H8Z M3 10.2 L6 8 V12.4Z M17.4 10.2 L14.4 8 V12.4Z" fill="#222"/>
</svg>
<div class="a" style="left:1699px;top:248px;width:28px;height:28px;box-sizing:border-box;border:1px solid #c2c2c2;background:#fff"></div>
<svg style="left:1703px;top:252px" width="21" height="21" viewBox="0 0 21 21">
 <rect x=".8" y=".8" width="18.8" height="18.8" fill="#fff" stroke="#333" stroke-width="1.5"/><path d="M4.700 1.500 H15.700 L10.200 5.800Z M4.700 18.900 H15.700 L10.200 14.600Z M1.500 5.800 V14.600 L6.600 10.200Z M18.900 5.800 V14.600 L13.800 10.200Z" fill="#222"/>
</svg>
<svg style="left:1736px;top:252px" width="21" height="21" viewBox="0 0 21 21">
 <rect x=".8" y=".8" width="18.8" height="18.8" fill="#f7f7f7" stroke="#333" stroke-width="1.5"/><path d="M5.5 1 V19.5 M10.2 1 V19.5 M14.9 1 V19.5 M1 7 H19.5 M1 13.2 H19.5" stroke="#333" stroke-width="1.3"/>
</svg>
<svg style="left:1769px;top:252px" width="21" height="21" viewBox="0 0 21 21">
 <rect x=".8" y=".8" width="18.8" height="18.8" fill="#f7f7f7" stroke="#333" stroke-width="1.5"/><path d="M14.6 3 V8.4 M11.9 5.7 H17.3" stroke="#222" stroke-width="1.2"/>
</svg>
<!-- X / Y fields -->
<span class="t" style="left:1525px;top:297px;font-size:13px;color:#c8c8c8">X:</span>
<div class="a" style="left:1541px;top:293px;width:131px;height:28px;box-sizing:border-box;border:1px solid #d0d0d0;background:#f3f3f3"></div>
<div class="vs" style="left:1649px;top:294px;height:26px;background:#d6d6d6"></div>
<span class="t" style="letter-spacing:-0.254px;left:1547px;top:297px;font-size:13px;color:#a0a0a0">105,0 мм</span>
<svg style="left:1657px;top:298px" width="8" height="18" viewBox="0 0 8 18"><path d="M1.200 5 L4 2.200 L6.800 5Z M1.200 13 L4 15.800 L6.800 13Z" fill="#cdcdcd"/></svg>
<span class="t" style="left:1526px;top:330px;font-size:13px;color:#c8c8c8">Y:</span>
<div class="a" style="left:1541px;top:326px;width:131px;height:28px;box-sizing:border-box;border:1px solid #d0d0d0;background:#f3f3f3"></div>
<div class="vs" style="left:1649px;top:327px;height:26px;background:#d6d6d6"></div>
<span class="t" style="letter-spacing:-0.254px;left:1547px;top:330px;font-size:13px;color:#a0a0a0">148,5 мм</span>
<svg style="left:1657px;top:331px" width="8" height="18" viewBox="0 0 8 18"><path d="M1.200 5 L4 2.200 L6.800 5Z M1.200 13 L4 15.800 L6.800 13Z" fill="#cdcdcd"/></svg>
<svg style="left:1681px;top:313px" width="21" height="21" viewBox="0 0 21 21">
 <circle cx="8.5" cy="12.5" r="7.6" fill="none" stroke="#c4c4c4" stroke-width="1.3"/><path d="M8.5 9 V16 M5 12.5 H12" stroke="#c4c4c4" stroke-width="1.2"/><path d="M16.5 1.5 L20 4 L16.5 5.5Z" fill="#c4c4c4"/>
</svg>
<div class="hs" style="left:1510px;top:369px;width:355px;background:#d9d9d9"></div>
<span class="t" style="letter-spacing:-0.516px;left:1510px;top:384px;font-size:13.5px;font-weight:bold;color:#000">Распределение</span>
<!-- distribute icons y 420-440 -->
<svg style="left:1513px;top:420px" width="22" height="22" viewBox="0 0 22 22">
 <path d="M1.5 0 V22 M13.5 0 V22" stroke="#5cb6e0" stroke-width="1.200" stroke-dasharray="2 1.600"/><path d="M3 3.3 H12" stroke="#222" stroke-width="1.2"/><path d="M2 3.3 L5 1.5 V5.1Z M13 3.3 L10 1.5 V5.1Z" fill="#222"/>
 <g fill="#f3f3f3" stroke="#222" stroke-width="1.4"><rect x="14.5" y="5.5" width="4.2" height="4.2"/><rect x="2.5" y="15.5" width="4.2" height="4.2"/></g>
</svg>
<svg style="left:1546px;top:420px" width="22" height="22" viewBox="0 0 22 22">
 <path d="M4.5 0 V22 M16.5 0 V22" stroke="#5cb6e0" stroke-width="1.200" stroke-dasharray="2 1.600"/><path d="M6 3.3 H15" stroke="#222" stroke-width="1.2"/><path d="M5 3.3 L8 1.5 V5.1Z M16 3.3 L13 1.5 V5.1Z" fill="#222"/>
 <g fill="#f3f3f3" stroke="#222" stroke-width="1.4"><rect x="2.4" y="8" width="4.2" height="4.2"/><rect x="14.4" y="13.5" width="4.2" height="4.2"/></g>
</svg>
<svg style="left:1579px;top:420px" width="22" height="22" viewBox="0 0 22 22">
 <path d="M7.500 0 V22 M19.5 0 V22" stroke="#5cb6e0" stroke-width="1.200" stroke-dasharray="2 1.600"/><path d="M9 3.3 H18" stroke="#222" stroke-width="1.2"/><path d="M8 3.3 L11 1.5 V5.1Z M19 3.3 L16 1.5 V5.1Z" fill="#222"/>
 <g fill="#f3f3f3" stroke="#222" stroke-width="1.4"><rect x="14.3" y="7.5" width="4.2" height="4.2"/><rect x="1.5" y="15.5" width="4.2" height="4.2"/></g>
</svg>
<svg style="left:1612px;top:420px" width="22" height="22" viewBox="0 0 22 22">
 <path d="M8.5 0 V22 M13.5 0 V22" stroke="#5cb6e0" stroke-width="1.200" stroke-dasharray="2 1.600"/><path d="M1 3.3 H6 M16 3.3 H21" stroke="#222" stroke-width="1.2"/><path d="M8 3.3 L5 1.5 V5.1Z M14 3.3 L17 1.5 V5.1Z" fill="#222"/>
 <g fill="#f3f3f3" stroke="#222" stroke-width="1.4"><rect x="15.3" y="7.5" width="4.2" height="4.2"/><rect x="1.5" y="15.5" width="4.2" height="4.2"/></g>
</svg>
<svg style="left:1678px;top:420px" width="22" height="22" viewBox="0 0 22 22">
 <path d="M0 1.500 H22 M0 13.5 H22" stroke="#5cb6e0" stroke-width="1.200" stroke-dasharray="2 1.600"/><path d="M18.7 3 V12" stroke="#222" stroke-width="1.2"/><path d="M18.7 2 L16.9 5 H20.5Z M18.7 13 L16.9 10 H20.500Z" fill="#222"/>
 <g fill="#f3f3f3" stroke="#222" stroke-width="1.4"><rect x="9.5" y="2.6" width="4.2" height="4.2"/><rect x="1.5" y="15.5" width="4.2" height="4.2"/></g>
</svg>
<svg style="left:1711px;top:420px" width="22" height="22" viewBox="0 0 22 22">
 <path d="M0 4.500 H22 M0 16.5 H22" stroke="#5cb6e0" stroke-width="1.200" stroke-dasharray="2 1.600"/><path d="M18.7 6 V15" stroke="#222" stroke-width="1.2"/><path d="M18.7 5 L16.900 8 H20.5Z M18.7 16 L16.9 13 H20.5Z" fill="#222"/>
 <g fill="#f3f3f3" stroke="#222" stroke-width="1.4"><rect x="10.5" y="1.8" width="4.2" height="4.2"/><rect x="4.5" y="15.5" width="4.2" height="4.2"/></g>
</svg>
<svg style="left:1744px;top:420px" width="22" height="22" viewBox="0 0 22 22">
 <path d="M0 8 H22 M0 19.500 H22" stroke="#5cb6e0" stroke-width="1.200" stroke-dasharray="2 1.600"/><path d="M18.7 9.5 V18" stroke="#222" stroke-width="1.2"/><path d="M18.7 8.500 L16.9 11.5 H20.5Z M18.7 19 L16.9 16 H20.5Z" fill="#222"/>
 <g fill="#f3f3f3" stroke="#222" stroke-width="1.4"><rect x="2.5" y="2" width="4.2" height="4.2"/><rect x="10" y="14" width="4.2" height="4.2"/></g>
</svg>
<svg style="left:1777px;top:420px" width="22" height="22" viewBox="0 0 22 22">
 <path d="M0 8.500 H22 M0 13.5 H22" stroke="#5cb6e0" stroke-width="1.200" stroke-dasharray="2 1.600"/><path d="M18.7 1 V5.500 M18.7 16.5 V21" stroke="#222" stroke-width="1.2"/><path d="M18.7 8 L16.900 5 H20.5Z M18.7 14 L16.9 17 H20.5Z" fill="#222"/>
 <g fill="#f3f3f3" stroke="#222" stroke-width="1.4"><rect x="10" y="1.800" width="4.2" height="4.2"/><rect x="2.5" y="15.5" width="4.2" height="4.2"/></g>
</svg>
<span class="t" style="letter-spacing:-0.167px;left:1513px;top:467px;font-size:13px;color:#111">Распределить узлы по:</span>
<div class="a" style="left:1669px;top:461px;width:28px;height:28px;box-sizing:border-box;border:1px solid #c2c2c2;background:#fff"></div>
<svg style="left:1673px;top:465px" width="21" height="21" viewBox="0 0 21 21">
 <rect x=".8" y=".8" width="18.8" height="18.8" fill="none" stroke="#3aa0cc" stroke-width="1.2" stroke-dasharray="1.6 1.4"/><path d="M2 10.2 H18.4" stroke="#222" stroke-width="1.3"/><path d="M.8 10.2 L4 8.2 V12.200Z M19.600 10.2 L16.4 8.2 V12.2Z" fill="#222"/>
</svg>
<svg style="left:1706px;top:465px" width="21" height="21" viewBox="0 0 21 21">
 <rect x=".8" y=".8" width="18.8" height="18.8" fill="#f7f7f7" stroke="#333" stroke-width="1.5"/><path d="M2 10.2 H18.4" stroke="#222" stroke-width="1.3"/><path d="M.8 10.2 L4 8.2 V12.2Z M19.6 10.2 L16.4 8.2 V12.2Z" fill="#222"/>
</svg>
<svg style="left:1738px;top:465px" width="22" height="21" viewBox="0 0 22 21">
 <path d="M2 3.500 H19" stroke="#444" stroke-width="1.1"/><path d="M.8 3.5 L3.6 1.800 V5.200Z M20.2 3.5 L17.4 1.8 V5.2Z" fill="#444"/>
 <rect x="1" y="8.500" width="19" height="10.500" fill="#e6e6e6" stroke="#222" stroke-width="1.5"/><text x="2.600" y="17" font-family="Liberation Sans,sans-serif" font-size="7.500" font-weight="bold" fill="#111" textLength="16" lengthAdjust="spacingAndGlyphs">1230</text>
</svg>
<span class="t" style="left:1525px;top:502px;font-size:13px;color:#c8c8c8">В:</span>
<div class="a" style="left:1541px;top:497px;width:131px;height:28px;box-sizing:border-box;border:1px solid #d0d0d0;background:#f3f3f3"></div>
<div class="vs" style="left:1649px;top:498px;height:26px;background:#d6d6d6"></div>
<span class="t" style="letter-spacing:-0.257px;left:1547px;top:501px;font-size:13px;color:#a0a0a0">5,08 мм</span>
<svg style="left:1657px;top:502px" width="8" height="18" viewBox="0 0 8 18"><path d="M1.200 5 L4 2.200 L6.800 5Z M1.200 13 L4 15.800 L6.800 13Z" fill="#cdcdcd"/></svg>
<span class="t" style="left:1525px;top:535px;font-size:13px;color:#c8c8c8">V:</span>
<div class="a" style="left:1541px;top:530px;width:131px;height:28px;box-sizing:border-box;border:1px solid #d0d0d0;background:#f3f3f3"></div>
<div class="vs" style="left:1649px;top:531px;height:26px;background:#d6d6d6"></div>
<span class="t" style="letter-spacing:-0.257px;left:1547px;top:534px;font-size:13px;color:#a0a0a0">5,08 мм</span>
<svg style="left:1657px;top:535px" width="8" height="18" viewBox="0 0 8 18"><path d="M1.200 5 L4 2.200 L6.800 5Z M1.200 13 L4 15.800 L6.800 13Z" fill="#cdcdcd"/></svg>
<div class="hs" style="left:1510px;top:573px;width:355px;background:#d9d9d9"></div>
<span class="t" style="letter-spacing:-0.556px;left:1510px;top:579px;font-size:13.5px;font-weight:bold;color:#c9c9c9">Текст</span>
<!-- text align icons y 618-638 (disabled) -->
<svg style="left:1516px;top:618px" width="22" height="22" viewBox="0 0 22 22">
 <text x="4.500" y="9" font-family="Liberation Sans,sans-serif" font-size="9.500" fill="#c2c2c2" stroke="#c2c2c2" stroke-width=".300" textLength="12.500" lengthAdjust="spacingAndGlyphs">Aa</text><path d="M1 10.800 H21" stroke="#c6c6c6" stroke-width="1.100"/><text x="4.500" y="20.300" font-family="Liberation Sans,sans-serif" font-size="9.500" fill="#c2c2c2" stroke="#c2c2c2" stroke-width=".300" textLength="12.500" lengthAdjust="spacingAndGlyphs">Bb</text>
</svg>
<svg style="left:1549px;top:618px" width="22" height="22" viewBox="0 0 22 22">
 <text x="4.500" y="9" font-family="Liberation Sans,sans-serif" font-size="9.500" fill="#c2c2c2" stroke="#c2c2c2" stroke-width=".300" textLength="12.500" lengthAdjust="spacingAndGlyphs">Aa</text><text x="4.500" y="18" font-family="Liberation Sans,sans-serif" font-size="9.500" fill="#c2c2c2" stroke="#c2c2c2" stroke-width=".300" textLength="12.500" lengthAdjust="spacingAndGlyphs">Bb</text><path d="M1 19.500 H21" stroke="#c6c6c6" stroke-width="1.1"/>
</svg>
<svg style="left:1582px;top:617px" width="22" height="22" viewBox="0 0 22 22">
 <text x="4.300" y="17.300" font-family="Liberation Sans,sans-serif" font-size="18" font-weight="bold" fill="#c2c2c2" textLength="12" lengthAdjust="spacingAndGlyphs">A</text>
 <g fill="#c6c6c6"><rect x="1" y="1" width="1.8" height="1.8"/><rect x="10" y="1" width="1.8" height="1.8"/><rect x="19" y="1" width="1.8" height="1.8"/><rect x="1" y="10" width="1.8" height="1.8"/><rect x="19" y="10" width="1.8" height="1.8"/><rect x="1" y="19" width="1.8" height="1.8"/><rect x="10" y="19" width="1.8" height="1.8"/><rect x="19" y="19" width="1.8" height="1.8"/></g>
</svg>
<div class="hs" style="left:1510px;top:660px;width:355px;background:#d9d9d9"></div>
<div class="a" style="left:1513px;top:679px;width:16px;height:16px;box-sizing:border-box;border:1px solid #b9b9b9;background:#fff"></div>
<span class="t" style="letter-spacing:0.150px;left:1532px;top:678px;font-size:13px;color:#111">Использовать абрис объектов</span>
<div class="hs" style="left:1510px;top:714px;width:355px;background:#d9d9d9"></div>
<div class="a" style="left:1541px;top:729px;width:294px;height:28px;box-sizing:border-box;border:1px solid #b4b4b4;background:#ebebeb"></div>
<span class="t" style="letter-spacing:-0.042px;left:1592px;top:733px;font-size:13px;color:#111">Выровнять по пиксельной сетке</span>
<div class="hs" style="left:1506px;top:167px;width:362px;background:#d6d6d6"></div>
<!-- docker tab strip (x 1868-1895) -->
<div class="a" style="left:1868px;top:167px;width:28px;height:821px;background:#e9e9e9"></div>
<div class="a" style="left:1868px;top:167px;width:1px;height:821px;background:#dadada"></div>
<div class="a" style="left:1869px;top:167px;width:27px;height:187px;background:#ababab"></div>
<svg style="left:1875px;top:175px" width="16" height="12" viewBox="0 0 16 12"><path d="M.800 -2 V14" stroke="#5fb0dc" stroke-width="1.200" stroke-dasharray="2 1.200"/><rect x="3" y="1.500" width="11.500" height="3.400" fill="none" stroke="#333" stroke-width="1.100"/><rect x="3" y="7.500" width="7.500" height="3.400" fill="none" stroke="#333" stroke-width="1.100"/></svg>
<span class="t" style="left:1819px;top:251px;width:126px;font-size:13px;color:#111;transform:rotate(90deg);text-align:center"><span style="letter-spacing:-0.045px">Выровнять и распр...</span></span>
<svg style="left:1875px;top:362px" width="14" height="14" viewBox="0 0 14 14"><path d="M6.8 0 V13.6 M0 6.8 H13.6" stroke="#b0b0b0" stroke-width="2.2"/></svg>
<!-- ===== color palette (x 1896-1920) ===== -->
<div class="a" style="left:1896px;top:140px;width:24px;height:848px;background:#f3f3f3"></div>
<svg style="left:1898px;top:142px" width="20" height="4" viewBox="0 0 20 4"><g fill="#c4c4c4"><rect x="0" y="0" width="1" height="1"/><rect x="2" y="0" width="1" height="1"/><rect x="4" y="0" width="1" height="1"/><rect x="6" y="0" width="1" height="1"/><rect x="8" y="0" width="1" height="1"/><rect x="10" y="0" width="1" height="1"/><rect x="12" y="0" width="1" height="1"/><rect x="14" y="0" width="1" height="1"/><rect x="16" y="0" width="1" height="1"/><rect x="18" y="0" width="1" height="1"/><rect x="1" y="2" width="1" height="1"/><rect x="3" y="2" width="1" height="1"/><rect x="5" y="2" width="1" height="1"/><rect x="7" y="2" width="1" height="1"/><rect x="9" y="2" width="1" height="1"/><rect x="11" y="2" width="1" height="1"/><rect x="13" y="2" width="1" height="1"/><rect x="15" y="2" width="1" height="1"/><rect x="17" y="2" width="1" height="1"/><rect x="19" y="2" width="1" height="1"/></g></svg>
<svg style="left:1905px;top:154px" width="6" height="11" viewBox="0 0 6 11"><path d="M.5 .5 V10.5 L5.5 5.5Z" fill="#454545"/></svg>
<svg style="left:1899px;top:174px" width="18" height="17" viewBox="0 0 18 17"><path d="M1 16 L1.8 13 L9.5 5.3 L11.7 7.5 L4 15.2 Z" fill="#d0d0d0" stroke="#b0b0b0" stroke-width="1"/><path d="M8.6 4 L13 8.4" stroke="#b0b0b0" stroke-width="2.2"/><path d="M10.8 6 L13 2 Q14.6 .4 16 1.8 Q17.2 3.2 15.8 4.8 L12.600 8Z" fill="#b0b0b0"/></svg>
<svg style="left:1902px;top:199px" width="12" height="8" viewBox="0 0 12 8"><path d="M1 7 L6 2 L11 7" stroke="#cfcfcf" stroke-width="2" fill="none"/></svg>
<div class="a" style="left:1897px;top:216px;width:22px;height:22px;background:#fff;box-sizing:border-box;border:1px solid #666"></div>
<svg style="left:1897px;top:216px" width="22" height="22" viewBox="0 0 22 22"><path d="M4 18 L18 4" stroke="#d43a3a" stroke-width="1"/></svg>
<div class="a" style="left:1897px;top:237px;width:22px;height:21px;background:#1a1a1a;box-shadow:inset 0 1px 0 rgba(0,0,0,.18)"></div>
<div class="a" style="left:1897px;top:258px;width:22px;height:21px;background:#333333;box-shadow:inset 0 1px 0 rgba(0,0,0,.18)"></div>
<div class="a" style="left:1897px;top:279px;width:22px;height:21px;background:#4d4d4d;box-shadow:inset 0 1px 0 rgba(0,0,0,.18)"></div>
<div class="a" style="left:1897px;top:300px;width:22px;height:21px;background:#666666;box-shadow:inset 0 1px 0 rgba(0,0,0,.18)"></div>
<div class="a" style="left:1897px;top:321px;width:22px;height:21px;background:#808080;box-shadow:inset 0 1px 0 rgba(0,0,0,.18)"></div>
<div class="a" style="left:1897px;top:342px;width:22px;height:21px;background:#999999;box-shadow:inset 0 1px 0 rgba(0,0,0,.18)"></div>
<div class="a" style="left:1897px;top:363px;width:22px;height:22px;background:#b3b3b3;box-shadow:inset 0 1px 0 rgba(0,0,0,.18)"></div>
<div class="a" style="left:1897px;top:385px;width:22px;height:21px;background:#cccccc;box-shadow:inset 0 1px 0 rgba(0,0,0,.18)"></div>
<div class="a" style="left:1897px;top:406px;width:22px;height:21px;background:#dedede;box-shadow:inset 0 1px 0 rgba(0,0,0,.18)"></div>
<div class="a" style="left:1897px;top:427px;width:22px;height:21px;background:#ececec;box-shadow:inset 0 1px 0 rgba(0,0,0,.18)"></div>
<div class="a" style="left:1897px;top:448px;width:22px;height:21px;background:#ffffff;box-shadow:inset 0 1px 0 rgba(0,0,0,.18)"></div>
<div class="a" style="left:1897px;top:469px;width:22px;height:21px;background:#3a2b93;box-shadow:inset 0 1px 0 rgba(0,0,0,.18)"></div>
<div class="a" style="left:1897px;top:490px;width:22px;height:21px;background:#189fdb;box-shadow:inset 0 1px 0 rgba(0,0,0,.18)"></div>
<div class="a" style="left:1897px;top:511px;width:22px;height:21px;background:#0ba55c;box-shadow:inset 0 1px 0 rgba(0,0,0,.18)"></div>
<div class="a" style="left:1897px;top:532px;width:22px;height:21px;background:#f7e21b;box-shadow:inset 0 1px 0 rgba(0,0,0,.18)"></div>
<div class="a" style="left:1897px;top:553px;width:22px;height:21px;background:#e0311f;box-shadow:inset 0 1px 0 rgba(0,0,0,.18)"></div>
<div class="a" style="left:1897px;top:574px;width:22px;height:21px;background:#e6097f;box-shadow:inset 0 1px 0 rgba(0,0,0,.18)"></div>
<div class="a" style="left:1897px;top:595px;width:22px;height:22px;background:#b4489b;box-shadow:inset 0 1px 0 rgba(0,0,0,.18)"></div>
<div class="a" style="left:1897px;top:617px;width:22px;height:21px;background:#f07f0f;box-shadow:inset 0 1px 0 rgba(0,0,0,.18)"></div>
<div class="a" style="left:1897px;top:638px;width:22px;height:21px;background:#fdc1c1;box-shadow:inset 0 1px 0 rgba(0,0,0,.18)"></div>
<div class="a" style="left:1897px;top:659px;width:22px;height:21px;background:#7b6b63;box-shadow:inset 0 1px 0 rgba(0,0,0,.18)"></div>
<div class="a" style="left:1897px;top:680px;width:22px;height:21px;background:#dcd7f6;box-shadow:inset 0 1px 0 rgba(0,0,0,.18)"></div>
<div class="a" style="left:1897px;top:701px;width:22px;height:21px;background:#b2a6e0;box-shadow:inset 0 1px 0 rgba(0,0,0,.18)"></div>
<div class="a" style="left:1897px;top:722px;width:22px;height:21px;background:#7a9bd7;box-shadow:inset 0 1px 0 rgba(0,0,0,.18)"></div>
<div class="a" style="left:1897px;top:743px;width:22px;height:21px;background:#8a73c9;box-shadow:inset 0 1px 0 rgba(0,0,0,.18)"></div>
<div class="a" style="left:1897px;top:764px;width:22px;height:21px;background:#9691c0;box-shadow:inset 0 1px 0 rgba(0,0,0,.18)"></div>
<div class="a" style="left:1897px;top:785px;width:22px;height:21px;background:#52689b;box-shadow:inset 0 1px 0 rgba(0,0,0,.18)"></div>
<div class="a" style="left:1897px;top:806px;width:22px;height:21px;background:#544f6c;box-shadow:inset 0 1px 0 rgba(0,0,0,.18)"></div>
<div class="a" style="left:1897px;top:827px;width:22px;height:22px;background:#7889a9;box-shadow:inset 0 1px 0 rgba(0,0,0,.18)"></div>
<div class="a" style="left:1897px;top:849px;width:22px;height:21px;background:#0c93d1;box-shadow:inset 0 1px 0 rgba(0,0,0,.18)"></div>
<div class="a" style="left:1897px;top:870px;width:22px;height:21px;background:#aeddf6;box-shadow:inset 0 1px 0 rgba(0,0,0,.18)"></div>
<div class="a" style="left:1897px;top:891px;width:22px;height:21px;background:#bdd1df;box-shadow:inset 0 1px 0 rgba(0,0,0,.18)"></div>
<div class="a" style="left:1897px;top:912px;width:22px;height:21px;background:#9aa8b1;box-shadow:inset 0 1px 0 rgba(0,0,0,.18)"></div>
<div class="a" style="left:1897px;top:933px;width:22px;height:5px;background:#6c7d88;box-shadow:inset 0 1px 0 rgba(0,0,0,.18)"></div>
<svg style="left:1902px;top:944px" width="12" height="8" viewBox="0 0 12 8"><path d="M1 1 L6 6 L11 1" stroke="#c4c4c4" stroke-width="2" fill="none"/></svg>
<svg style="left:1902px;top:965px" width="12" height="11" viewBox="0 0 12 11"><path d="M1 1 L5.500 5.500 L1 10 M6 1 L10.500 5.500 L6 10" stroke="#c4c4c4" stroke-width="1.400" fill="none"/></svg>
<!-- ===== status bar (y 989-1030) ===== -->
<div class="a" style="left:0;top:989px;width:1920px;height:41px;background:#f3f3f3"></div>
<svg style="left:10px;top:998px" width="24" height="24" viewBox="0 0 24 24">
 <g transform="translate(11,11)"><circle r="6" fill="none" stroke="#333" stroke-width="3.400"/>
 <g fill="#333"><rect x="-2.100" y="-10" width="4.200" height="3.800" rx="1"/><rect x="-2.100" y="6.200" width="4.200" height="3.800" rx="1"/><rect x="-10" y="-2.100" width="3.800" height="4.200" rx="1"/><rect x="6.200" y="-2.100" width="3.800" height="4.200" rx="1"/>
 <g transform="rotate(45)"><rect x="-2.100" y="-10" width="4.200" height="3.800" rx="1"/><rect x="-2.100" y="6.200" width="4.200" height="3.800" rx="1"/><rect x="-10" y="-2.100" width="3.800" height="4.200" rx="1"/><rect x="6.200" y="-2.100" width="3.800" height="4.200" rx="1"/></g></g></g>
 <path d="M23.500 18.500 V23 H19Z" fill="#7a7a7a"/>
</svg>
<span class="t" style="letter-spacing:0.027px;left:40.5px;top:1000px;font-size:13px;color:#111">Инструмент с двойным щелчком выбирает все узлы на выбранном объекте;</span>
<span class="t" style="letter-spacing:0.221px;left:507.4px;top:1000px;font-size:13px;color:#111">Shift+щелчок</span>
<span class="t" style="letter-spacing:0.024px;left:591.7px;top:1000px;font-size:13px;color:#111">- выбор нескольких элементов;</span>
<span class="t" style="letter-spacing:0.233px;left:784.8px;top:1000px;font-size:13px;color:#111">двойной щелчок кривой</span>
<span class="t" style="letter-spacing:0.000px;left:936.7px;top:1000px;font-size:13px;color:#111">- добавление узла;</span>
<span class="t" style="letter-spacing:0.121px;left:1054.8px;top:1000px;font-size:13px;color:#111">двойной щелчок узла</span>
<span class="t" style="letter-spacing:-0.003px;left:1189.8px;top:1000px;font-size:13px;color:#111">- его удаление</span>

<span class="t" style="letter-spacing:-0.070px;left:1311px;top:1000px;font-size:13px;color:#111">Кривая, узлов: 33</span>
<svg style="left:1438px;top:999px" width="23" height="22" viewBox="0 0 23 22">
 <path d="M1.500 10.500 L9.500 2.500 L17.500 10.500 L9.500 18.500Z" fill="#fff" stroke="#222" stroke-width="1.500"/><path d="M7.500 1 L18.500 8.500" stroke="#222" stroke-width="2.200"/><path d="M4.500 11.500 H14.500 L9.500 16Z" fill="#d42a2a"/><path d="M22 13 V21 H15Z" fill="#d42a2a"/>
</svg>
<div class="a" style="left:1462px;top:996px;width:26px;height:26px;box-sizing:border-box;border:1px solid #bdbdbd;background:#fff"></div>
<svg style="left:1462px;top:996px" width="26" height="26" viewBox="0 0 26 26"><path d="M1.500 24.500 L24.500 1.500" stroke="#c23030" stroke-width="1.600"/></svg>
<span class="t" style="letter-spacing:-0.380px;left:1492.500px;top:1000px;font-size:13px;color:#111">Нет</span>
<svg style="left:1695px;top:997px" width="13" height="23" viewBox="0 0 13 23">
 <path d="M6.500 1 L10.800 11 Q11 14 9 15.500 H4 Q2 14 2.200 11 Z" fill="#fff" stroke="#222" stroke-width="1.300"/><path d="M6.500 2 V10" stroke="#222" stroke-width="1"/><circle cx="6.500" cy="11" r="1.200" fill="#222"/><rect x="3.800" y="16.500" width="5.400" height="5" fill="#fff" stroke="#222" stroke-width="1.300"/>
</svg>
<div class="a" style="left:1712px;top:996px;width:26px;height:26px;box-sizing:border-box;border:1px solid #9a9a9a;background:#333"></div>
<span class="t" style="letter-spacing:-0.375px;left:1742.500px;top:1000px;font-size:13px;color:#111">R:51 G:51 B:51 (#333333)</span>
<span class="t" style="letter-spacing:0.172px;left:1895.500px;top:1000px;font-size:13px;color:#111">0,56</span>

<!-- ===== windows taskbar (y 1030-1080) ===== -->
<div class="a" style="left:0;top:1030px;width:1920px;height:50px;background:#1e2e34"></div>
<svg style="left:19.500px;top:1044.500px" width="21" height="21" viewBox="0 0 21 21">
 <path d="M0 2.900 L8.600 1.700 V9.900 H0Z M9.700 1.550 L20.500 0 V9.900 H9.700Z M0 11 H8.600 V19.200 L0 18Z M9.700 11 H20.500 V21 L9.700 19.400Z" fill="#fff"/>
</svg>
<!-- search box -->
<div class="a" style="left:60px;top:1030px;width:360px;height:50px;box-sizing:border-box;background:#f2f2f2;border-top:1px solid #bcbcbc;border-bottom:1px solid #bcbcbc"></div>
<svg style="left:74px;top:1044px" width="22" height="22" viewBox="0 0 22 22"><circle cx="14" cy="8" r="6.200" fill="none" stroke="#222" stroke-width="1.600"/><path d="M9.500 12.500 L1 21" stroke="#222" stroke-width="1.700"/></svg>
<span class="t" style="letter-spacing:0.722px;left:111px;top:1044px;line-height:24px;height:24px;font-size:18px;color:#2b2b2b">Поиск</span>
<!-- beach illustration -->
<svg style="left:320px;top:1031px" width="100" height="48" viewBox="0 1 100 48">
 <defs><linearGradient id="sea" x1="0" y1="0" x2="1" y2="1"><stop offset="0" stop-color="#3fd0d0"/><stop offset=".45" stop-color="#27b4cc"/><stop offset="1" stop-color="#bfe8ea"/></linearGradient>
 <linearGradient id="sand" x1="0" y1="0" x2="1" y2="0"><stop offset="0" stop-color="#f3d9b6"/><stop offset="1" stop-color="#dda574"/></linearGradient>
 <linearGradient id="cl" x1="0" y1="0" x2="0" y2="1"><stop offset="0" stop-color="#f0c3a2"/><stop offset=".6" stop-color="#e0ac98"/><stop offset="1" stop-color="#a9a6cc"/></linearGradient>
 <linearGradient id="hill" x1="0" y1="0" x2="0" y2="1"><stop offset="0" stop-color="#78a83a"/><stop offset="1" stop-color="#3f7a26"/></linearGradient></defs>
 <path d="M-9 49 Q30 46 60 44 Q82 40 86 33 L100 31 V49Z" fill="url(#sand)"/>
 <path d="M66 30 Q74 21 86 19.500 Q95 19 100 21.500 V31 H66Z" fill="url(#hill)"/>
 <path d="M-8 49 Q-2 41 4 36 Q8 31 22 30.500 Q50 29 68 29.500 Q84 30 87 34 Q86 41 66 45 Q40 48.500 -8 49Z" fill="url(#sea)"/>
 <path d="M3 38 Q6 32 14 32 Q40 31 66 30.500 Q40 35 22 38 Q10 41 3 38Z" fill="#19c0c4"/>
 <path d="M20 37 Q40 33 62 31.500 Q44 36 22 39.500Z" fill="#d6fbfa" opacity=".75"/>
 <path d="M12.500 15 Q11 13.500 13.500 13 Q14 11 16.500 11.500 Q18 9 21 10 Q23 9.300 24.500 11 Q27 10 28.500 12 Q31 11.500 32 13 Q36 13.500 35 15Z" fill="url(#cl)"/>
 <path d="M29.500 20.500 Q28 18.500 31 17.500 Q32 15.500 35 16 Q36 13.500 39 14 Q40 11 44 11.500 Q47 10.500 49 13 Q52 11.500 54.500 13.500 Q58 13.500 58.500 16.500 Q60.500 19 58 20.500Z" fill="url(#cl)"/>
 <g stroke="#5a3d1c" stroke-width=".9" fill="none"><path d="M84.500 20.500 Q84 16 84.800 12.500"/><path d="M77 21.500 Q76.500 18.500 77 16"/></g>
 <g fill="#2f8f2c"><path d="M84.800 12.500 Q80 10.500 78.500 13.500 Q81.500 12 84.500 13.500 Q81.500 14.500 81 18 Q83.500 14.500 85 13.800 Q88 15 88 18.500 Q89.500 14.500 86 13 Q89.500 11.500 91.500 14 Q90.500 10 86 11.800 Q87.500 8.500 85 7.500 Q85.800 10 84.800 12.500Z M84.800 12.500 Q82.500 8.500 79.500 9 Q83 10 84.800 12.500Z M85 12 Q87 8 90.500 9 Q87 9.500 85 12Z"/>
 <path d="M77 16 Q73.500 14.500 72 17 Q74.500 16 77 17 Q75 18.500 75 21 Q76.500 18 77.500 17.500 Q80 18.500 80 21 Q81 17.500 78 16.500 Q80.500 15 82 17 Q81 13.500 77.800 15.300 Q78 12.500 76 12 Q77 14 77 16Z"/></g>
</svg>
<!-- task view -->
<svg style="left:439px;top:1044px" width="22" height="21" viewBox="0 0 22 21">
 <g stroke="#fff" stroke-width="1.300" fill="none"><rect x="1.600" y="7" width="12.400" height="8"/><path d="M1.600 1 V4 H14 V1 M1.600 20 V17 H14 V20"/><path d="M19.300 1 V5.500 M19.300 10.500 V20"/></g><rect x="17.800" y="6.800" width="3" height="2.800" fill="#fff"/>
</svg>
<!-- this PC -->
<svg style="left:500px;top:1043px" width="30" height="26" viewBox="0 0 30 26">
 <path d="M9 1 L28 4 V17 L9 13Z" fill="#4aa8e8" stroke="#d8e6f0" stroke-width="1.200"/><path d="M10.500 3 L26.500 5.500 V15 L10.500 11.500Z" fill="#2d8fdc"/>
 <path d="M17 15 L20 16 L18 19 H14Z" fill="#b9c4cc"/><path d="M2 20 L16 17.500 L22 20 L7 24Z" fill="#e4e9ec" stroke="#aab4ba" stroke-width=".8"/>
</svg>
<!-- opera -->
<svg style="left:561px;top:1040px" width="30" height="30" viewBox="0 0 30 30">
 <ellipse cx="15" cy="15" rx="14" ry="14.400" fill="#e8202a"/><ellipse cx="15" cy="15" rx="6.200" ry="10.400" fill="#1e2e34"/><path d="M15 .6 Q24 2 27 10 Q29 18 25 24 Q21 29 15 29.400 Q25 26 25 15 Q25 4 15 .6Z" fill="#a80e18" opacity=".6"/>
</svg>
<!-- explorer -->
<svg style="left:623px;top:1042px" width="30" height="25" viewBox="0 0 30 25">
 <path d="M1 3 Q1 1 3 1 H10 L12.500 4 H27 Q29 4 29 6 V22 H1Z" fill="#e8b62c"/><path d="M1 7 H29 V22 Q29 24 27 24 H3 Q1 24 1 22Z" fill="#fbd766"/>
 <path d="M6 14 H24 V24 H6Z" fill="#3d92d4"/><path d="M10 18 H20 V24 H10Z" fill="#fbd766"/><path d="M6 14 H24 V16 H6Z" fill="#7cc0f0"/>
</svg>
<div class="a" style="left:613px;top:1077px;width:51px;height:3px;background:#7dbbec"></div>
<!-- coreldraw (active) -->
<div class="a" style="left:670px;top:1030px;width:56px;height:50px;background:#46565b"></div><div class="a" style="left:726px;top:1030px;width:5px;height:50px;background:#3a4a4f"></div>
<div class="a" style="left:670px;top:1077px;width:61px;height:3px;background:#8cc6f2"></div>
<svg style="left:685px;top:1039px" width="31" height="31" viewBox="0 0 31 31">
 <defs><linearGradient id="cg2" x1="0" y1="0" x2="1" y2="1"><stop offset="0" stop-color="#35dc45"/><stop offset="1" stop-color="#0a8a2a"/></linearGradient></defs>
 <rect x="0" y="0" width="31" height="30" rx="7" fill="url(#cg2)"/><path d="M0 13 Q0 30 12 30 L21 30 Z" fill="#0a5c1e" opacity=".6"/>
 <path d="M6 7.500 L9.500 4.500 L24.500 19.500 Q26 23.500 22.500 23 Z" fill="#fff"/><path d="M21 20 L23.500 18" stroke="#9bd6a2" stroke-width="1"/>
</svg>
<!-- tray -->
<svg style="left:1609px;top:1048.500px" width="18" height="12" viewBox="0 0 18 12"><path d="M1 10.500 L9 2 L17 10.500" stroke="#fff" stroke-width="1.500" fill="none"/></svg>
<svg style="left:1638.500px;top:1049px" width="20" height="13" viewBox="0 0 21 13"><rect x=".7" y="1.700" width="17.600" height="9.600" fill="none" stroke="#fff" stroke-width="1.300"/><rect x="2.600" y="3.600" width="9.500" height="5.800" fill="#fff"/><rect x="18.900" y="4.500" width="1.800" height="4" fill="#fff"/></svg>
<svg style="left:1670px;top:1046px" width="18" height="18" viewBox="0 0 18 18"><g fill="none" stroke="#fff" stroke-width="1.300"><path d="M1.500 16 A14.500 14.500 0 0 1 16 1.500"/><path d="M5.500 16.500 A10.500 10.500 0 0 1 16 6"/><path d="M9.500 16.800 A6.500 6.500 0 0 1 16 10.500"/></g><circle cx="14.800" cy="15.200" r="1.600" fill="#fff"/></svg>
<svg style="left:1697px;top:1047px" width="21" height="16" viewBox="0 0 21 16"><path d="M1 5.500 H4 L8 1.500 V14.500 L4 10.500 H1Z" fill="none" stroke="#fff" stroke-width="1.200"/><path d="M12 4.500 L19 11.500 M19 4.500 L12 11.500" stroke="#fff" stroke-width="1.200"/></svg>
<span class="t" style="letter-spacing:-1.016px;left:1732.500px;top:1044.500px;font-size:14px;color:#fff">РУС</span>
<span class="t" style="letter-spacing:-0.009px;left:1793px;top:1033px;font-size:14px;color:#fff">20:30</span>
<span class="t" style="letter-spacing:-0.058px;left:1776px;top:1055.500px;font-size:14px;color:#fff">05.04.2024</span>
<svg style="left:1868px;top:1045px" width="22" height="20" viewBox="0 0 22 20"><path d="M1.500 1 H20.500 V16.500 H13 L11 19 L9 16.500 H1.500Z" fill="none" stroke="#fff" stroke-width="1.300"/></svg>
<div class="a" style="left:1913px;top:1030px;width:1px;height:50px;background:#55626a"></div>
</body>
</html>
